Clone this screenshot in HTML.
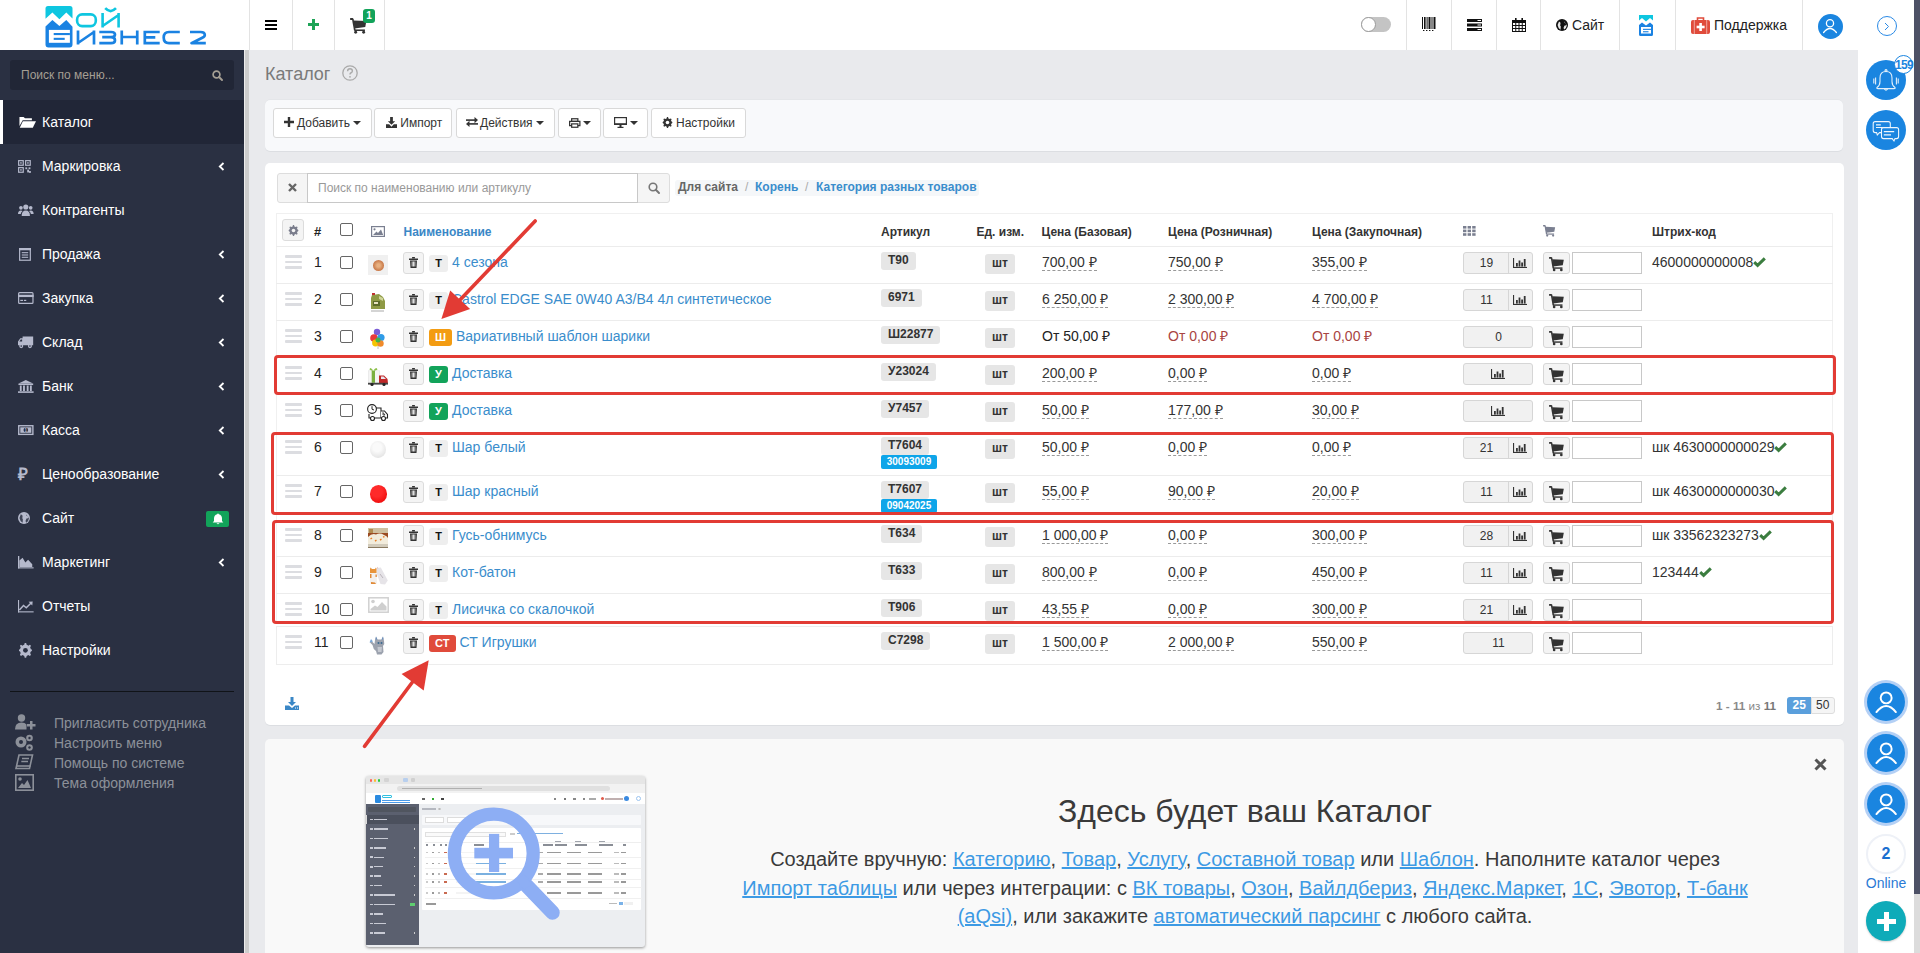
<!DOCTYPE html><html><head><meta charset="utf-8"><style>
*{box-sizing:border-box;margin:0;padding:0}
html,body{width:1920px;height:953px;overflow:hidden}
body{background:#e9eaed;font-family:"Liberation Sans",sans-serif;font-size:14px;color:#333;position:relative}
.a{position:absolute}
svg{position:absolute;overflow:visible}
.hb{position:absolute;top:0;height:50px;border-left:1px solid #e3e3e3}
.mi{position:absolute;left:0;width:244px;height:44px;color:#fff;font-size:14px;line-height:44px;white-space:nowrap}
.mi .t{position:absolute;left:42px;top:0}
.ch{position:absolute;left:218px;top:17px}
.nw{white-space:nowrap}
</style></head><body>
<div class="a" style="left:0;top:0;width:1858px;height:50px;background:#fff"></div>
<div class="hb" style="left:249px;width:44px"></div>
<div class="hb" style="left:292px;width:43px"></div>
<div class="hb" style="left:334px;width:51px"></div>
<div class="hb" style="left:1406px;width:46px"></div>
<div class="hb" style="left:1451px;width:46px"></div>
<div class="hb" style="left:1496px;width:45px"></div>
<div class="hb" style="left:1540px;width:80px"></div>
<div class="hb" style="left:1619px;width:57px"></div>
<div class="hb" style="left:1675px;width:128px"></div>
<div class="hb" style="left:1802px;width:57px"></div>
<div class="hb" style="left:384px;width:1px"></div>
<div class="hb" style="left:1858px;width:1px"></div>
<svg style="left:0;top:0" width="244" height="50" viewBox="0 0 244 50">
<path d="M45.5 8.5 Q45.5 6 48 6 L70 6 Q72.5 6 72.5 8.5 L72.5 18.4 L66.3 12.6 L59.4 19.2 L52.4 12.6 L45.5 18.8 Z" fill="#0ec6e0"/>
<path d="M45.5 26.5 L52.4 20 L59.4 26 L66.3 20 L72.5 26.8 L72.5 44.5 Q72.5 47.5 69.5 47.5 L48.5 47.5 Q45.5 47.5 45.5 44.5 Z" fill="#1a82e2"/>
<rect x="48.9" y="29.9" width="21" height="12.9" fill="#fff"/>
<rect x="53.7" y="33" width="16.2" height="2.1" fill="#1a82e2"/>
<rect x="53.7" y="37.8" width="11" height="2.1" fill="#1a82e2"/>
<g fill="none" stroke="#0ec6e0" stroke-width="2.6">
<rect x="77.1" y="14.4" width="18.7" height="11.7" rx="5"/>
<path d="M102.6 13 L102.6 27.5 M102.6 26 L118.6 15 M118.6 13 L118.6 27.5"/>
<path d="M105.2 8.2 Q110.6 14 116 8.2" />
</g>
<g fill="none" stroke="#1a82e2" stroke-width="2.7">
<path d="M78 30.5 L78 44.5 M78 43 L94 32 M94 30.5 L94 44.5"/>
<path d="M99.3 32 L111 32 Q115 32 115 34.6 Q115 37.2 111 37.2 L102.2 37.2 M111 37.2 Q115 37.2 115 40.2 Q115 43.2 111 43.2 L99.3 43.2"/>
<path d="M121.75 30.5 L121.75 44.5 M137.25 30.5 L137.25 44.5 M121.75 37 L137.25 37"/>
<path d="M159.7 32 L144.8 32 L144.8 43.2 L159.7 43.2 M144.8 37.3 L155.3 37.3" stroke-linejoin="miter"/>
<path d="M179.8 32 L169 32 Q163.7 32 163.7 37.6 Q163.7 43.2 169 43.2 L179.8 43.2"/>
<path d="M190 32 L200.5 32 Q204.8 32 204.8 35 Q204.8 36.6 202.3 37.7 L191.5 43.2 L205.8 43.2" stroke-linejoin="round"/>
</g>
</svg>
<div class="a" style="left:265px;top:20px;width:12px;height:2.4px;background:#000"></div>
<div class="a" style="left:265px;top:24px;width:12px;height:2.4px;background:#000"></div>
<div class="a" style="left:265px;top:28px;width:12px;height:2.4px;background:#000"></div>
<div class="a" style="left:308px;top:23.2px;width:11px;height:3px;background:#1ea457"></div>
<div class="a" style="left:312px;top:19px;width:3px;height:11px;background:#1ea457"></div>
<svg style="left:350px;top:18px" width="16.8" height="15.75" viewBox="0 0 16 15"><g fill="#333"><rect x="0" y="0" width="3" height="1.8" rx=".6"/><path d="M1.8 0.6 L3.4 0.6 L5.4 12 L3.8 12 Z"/><path d="M3.2 2.4 L15.6 2.8 L14.5 8.6 L4.3 9.9 Z"/><rect x="4.2" y="10.9" width="10" height="1.5"/><circle cx="5.4" cy="13.6" r="1.4"/><circle cx="13" cy="13.6" r="1.4"/></g></svg>
<div class="a" style="left:363px;top:9px;width:12px;height:14px;background:#12a35a;border-radius:3px;color:#fff;font-size:10px;font-weight:bold;line-height:14px;text-align:center">1</div>
<div class="a" style="left:1361px;top:17px;width:30px;height:15px;background:#c4c4c4;border-radius:8px"></div>
<div class="a" style="left:1361px;top:17px;width:15px;height:15px;background:#fff;border:1px solid #9a9a9a;border-radius:50%"></div>
<svg style="left:1422px;top:17px" width="14" height="14" viewBox="0 0 14 14"><g fill="#111">
<rect x="0" y="0" width="1" height="12"/><rect x="2" y="0" width="1.6" height="12"/><rect x="4.6" y="0" width="1" height="12"/><rect x="6.5" y="0" width="2" height="12"/><rect x="9.5" y="0" width="1" height="12"/><rect x="11.5" y="0" width="2" height="12"/>
<rect x="1" y="13" width="1.4" height="1"/><rect x="4" y="13" width="1.4" height="1"/><rect x="7" y="13" width="1.4" height="1"/><rect x="10" y="13" width="1.4" height="1"/></g></svg>
<svg style="left:1467px;top:19px" width="15" height="12" viewBox="0 0 15 12"><g fill="#111">
<rect x="0" y="0" width="15" height="3"/><rect x="0" y="4.5" width="15" height="3"/><rect x="0" y="9" width="15" height="3"/></g>
<g fill="#fff"><rect x="10.5" y="1" width="3.5" height="1"/><rect x="10.5" y="5.5" width="3.5" height="1"/><rect x="10.5" y="10" width="3.5" height="1"/></g></svg>
<svg style="left:1512px;top:18px" width="14" height="14" viewBox="0 0 14 14"><g fill="#111">
<rect x="0" y="2" width="14" height="3"/><rect x="3" y="0" width="1.6" height="3"/><rect x="9.4" y="0" width="1.6" height="3"/></g>
<g fill="none" stroke="#111" stroke-width="1"><rect x="0.5" y="4.5" width="13" height="9"/><path d="M3.75 4.5V13.5M7 4.5V13.5M10.25 4.5V13.5M0.5 7.5H13.5M0.5 10.5H13.5"/></g></svg>
<svg style="left:1556px;top:19px" width="12" height="12" viewBox="0 0 12 12"><circle cx="6" cy="6" r="6" fill="#111"/><path d="M3 2.5 Q5 3 4.5 5 Q3.5 6 4.8 7.5 L4.5 10.8 Q2 9 1.6 6 Z M7.5 1.2 Q9 2.5 8.3 3.5 Q9.8 4 10.6 5.5 Q9.5 7 8.5 6.5 Q7 8.5 8.3 10.6 Q10.5 9 10.8 6.5" fill="#fff" opacity=".9"/></svg>
<div class="a nw" style="left:1572px;top:16px;font-size:14px;line-height:18px;color:#222">Сайт</div>
<svg style="left:1639px;top:15px" width="14" height="21" viewBox="0 0 14 21">
<path d="M0 0 L14 0 L14 5.5 L11 3 L7 6.5 L3 3 L0 5.5 Z" fill="#0ec6e0"/>
<path d="M0 10 L3 7.5 L7 10.5 L11 7.5 L14 10 L14 19.5 Q14 21 12.5 21 L1.5 21 Q0 21 0 19.5 Z" fill="#1a82e2"/>
<rect x="2" y="12" width="10" height="6.5" fill="#fff"/><rect x="4" y="13.8" width="8" height="1.1" fill="#1a82e2"/><rect x="4" y="16.2" width="5.5" height="1.1" fill="#1a82e2"/></svg>
<svg style="left:1691px;top:17px" width="19" height="17" viewBox="0 0 19 17">
<path d="M6.5 3 L6.5 1 L12.5 1 L12.5 3" fill="none" stroke="#e04b3b" stroke-width="1.6"/>
<rect x="0" y="3" width="19" height="14" rx="2" fill="#e04b3b"/>
<rect x="2.8" y="3" width="1" height="14" fill="#fff" opacity=".5"/><rect x="15.2" y="3" width="1" height="14" fill="#fff" opacity=".5"/>
<rect x="8.3" y="6" width="2.6" height="8" fill="#fff"/><rect x="5.6" y="8.7" width="8" height="2.6" fill="#fff"/></svg>
<div class="a nw" style="left:1714px;top:16px;font-size:14px;line-height:18px;color:#222">Поддержка</div>
<div class="a" style="left:1817.5px;top:13.5px;width:25.0px;height:25.0px;border-radius:50%;background:#1a85e0;"></div><svg style="left:1822.0px;top:18.0px" width="16.0" height="16.0" viewBox="0 0 16 16"><circle cx="8" cy="5.2" r="3.6" fill="none" stroke="#fff" stroke-width="1.3"/><path d="M1.6 14.5 Q8 6.5 14.4 14.5" fill="none" stroke="#fff" stroke-width="1.3" stroke-linecap="round"/></svg>
<div class="a" style="left:1858px;top:0;width:56px;height:953px;background:#fff"></div>
<div class="a" style="left:1914px;top:0;width:6px;height:894px;background:#4d5166"></div>
<div class="a" style="left:1914px;top:894px;width:6px;height:59px;background:#dcdcdc"></div>
<div class="a" style="left:1877px;top:16px;width:20px;height:20px;border:1px solid #2a8ae6;border-radius:50%"></div>
<svg style="left:1884px;top:22px" width="6" height="9" viewBox="0 0 6 9"><path d="M1 1 L4.5 4.5 L1 8" fill="none" stroke="#2a8ae6" stroke-width="1"/></svg>
<div class="a" style="left:1866px;top:60px;width:40px;height:40px;border-radius:50%;background:#1a85e0"></div>
<svg style="left:1872px;top:68px" width="28" height="24" viewBox="0 0 28 24"><g fill="none" stroke="#fff" stroke-width="1.1" opacity=".88">
<path d="M14 3.5 Q8 3.5 8 10 L8 13.5 Q8 17.5 5 19.5 Q4.3 20.6 6 20.6 L22 20.6 Q23.7 20.6 23 19.5 Q20 17.5 20 13.5 L20 10 Q20 3.5 14 3.5 Z"/><circle cx="14" cy="2.6" r="1"/><path d="M12.3 20.8 Q14 23.5 15.7 20.8"/>
<path d="M1.8 10.5 L1.8 15.5 M3.6 9.6 L3.6 16.4 M26.2 10.5 L26.2 15.5 M24.4 9.6 L24.4 16.4"/></g></svg>
<div class="a" style="left:1893.8px;top:54.9px;width:19px;height:19px;border-radius:50%;background:#fff;border:1px solid #1a85e0"></div>
<div class="a nw" style="left:1892px;top:58px;width:24px;text-align:center;font-size:12px;font-weight:bold;color:#1a85e0;line-height:15px;letter-spacing:-0.6px">159</div>
<div class="a" style="left:1866px;top:110px;width:40px;height:40px;border-radius:50%;background:#1a85e0"></div>
<svg style="left:1872px;top:118px" width="28" height="24" viewBox="0 0 28 24"><g stroke="#fff" stroke-width="1.1" opacity=".92">
<path d="M3.2 3.6 L16.3 3.6 Q18.3 3.6 18.3 5.6 L18.3 12.6 Q18.3 14.6 16.3 14.6 L7.5 14.6 L5.3 17 L4.6 14.6 L3.2 14.6 Q1.2 14.6 1.2 12.6 L1.2 5.6 Q1.2 3.6 3.2 3.6 Z" fill="none"/>
<path d="M4 6.9 L8.8 6.9 M4 9.5 L14.5 9.5" fill="none"/>
<path d="M11.5 9.6 L24.6 9.6 Q26.6 9.6 26.6 11.6 L26.6 18.6 Q26.6 20.6 24.6 20.6 L23 20.6 L22 23 L20.2 20.6 L11.5 20.6 Q9.5 20.6 9.5 18.6 L9.5 11.6 Q9.5 9.6 11.5 9.6 Z" fill="#1a85e0"/>
<path d="M11.8 13.6 L22.2 13.6 M11.8 16.9 L19 16.9" fill="none"/></g></svg>
<div class="a" style="left:1867px;top:683px;width:38px;height:38px;border-radius:50%;background:#1a85e0;box-shadow:0 0 0 3px #b4d0f5"></div><svg style="left:1873.84px;top:689.84px" width="24.32" height="24.32" viewBox="0 0 16 16"><circle cx="8" cy="5.2" r="3.6" fill="none" stroke="#fff" stroke-width="1.3"/><path d="M1.6 14.5 Q8 6.5 14.4 14.5" fill="none" stroke="#fff" stroke-width="1.3" stroke-linecap="round"/></svg>
<div class="a" style="left:1867px;top:734px;width:38px;height:38px;border-radius:50%;background:#1a85e0;box-shadow:0 0 0 3px #b4d0f5"></div><svg style="left:1873.84px;top:740.84px" width="24.32" height="24.32" viewBox="0 0 16 16"><circle cx="8" cy="5.2" r="3.6" fill="none" stroke="#fff" stroke-width="1.3"/><path d="M1.6 14.5 Q8 6.5 14.4 14.5" fill="none" stroke="#fff" stroke-width="1.3" stroke-linecap="round"/></svg>
<div class="a" style="left:1867px;top:785px;width:38px;height:38px;border-radius:50%;background:#1a85e0;box-shadow:0 0 0 3px #b4d0f5"></div><svg style="left:1873.84px;top:791.84px" width="24.32" height="24.32" viewBox="0 0 16 16"><circle cx="8" cy="5.2" r="3.6" fill="none" stroke="#fff" stroke-width="1.3"/><path d="M1.6 14.5 Q8 6.5 14.4 14.5" fill="none" stroke="#fff" stroke-width="1.3" stroke-linecap="round"/></svg>
<div class="a" style="left:1866px;top:833.5px;width:40px;height:40px;border-radius:50%;border:2px solid #eef1f7"></div>
<div class="a" style="left:1866px;top:845px;width:40px;text-align:center;font-size:16px;font-weight:bold;color:#1a6fd0;line-height:18px">2</div>
<div class="a nw" style="left:1858px;top:875px;width:56px;text-align:center;font-size:14px;color:#2a7ad5;line-height:16px">Online</div>
<div class="a" style="left:1866px;top:901px;width:40px;height:40px;border-radius:50%;background:#0eabb9;box-shadow:0 1px 2px rgba(0,0,0,.2)"></div>
<div class="a" style="left:1876.5px;top:918.5px;width:19px;height:5px;background:#fff"></div>
<div class="a" style="left:1883.5px;top:911.5px;width:5px;height:19px;background:#fff"></div>
<div class="a" style="left:0;top:50px;width:244px;height:903px;background:#2a3042"></div>
<div class="a" style="left:244px;top:50px;width:1px;height:903px;background:#ececec"></div>
<div class="a" style="left:245px;top:50px;width:4px;height:903px;background:#cdcdcd"></div>
<div class="a" style="left:10px;top:60px;width:224px;height:30px;background:#212636;border-radius:3px"></div>
<div class="a nw" style="left:21px;top:68px;font-size:12px;line-height:14px;color:#a59f94">Поиск по меню...</div>
<svg style="left:212px;top:70px" width="11" height="11" viewBox="0 0 11 11"><circle cx="4.5" cy="4.5" r="3.4" fill="none" stroke="#a59f94" stroke-width="1.7"/><path d="M7 7 L10 10" stroke="#a59f94" stroke-width="2" stroke-linecap="round"/></svg>
<div class="a" style="left:0;top:100px;width:244px;height:44px;background:#212637"></div>
<div class="a" style="left:0;top:100px;width:3px;height:44px;background:#fff"></div>
<div class="mi" style="top:100px"><span class="t">Каталог</span></div>
<div class="mi" style="top:144px"><span class="t">Маркировка</span></div>
<svg style="left:218px;top:162px" width="7" height="9" viewBox="0 0 7 9"><path d="M5.5 1 L1.8 4.5 L5.5 8" fill="none" stroke="#fff" stroke-width="1.8"/></svg>
<div class="mi" style="top:188px"><span class="t">Контрагенты</span></div>
<div class="mi" style="top:232px"><span class="t">Продажа</span></div>
<svg style="left:218px;top:250px" width="7" height="9" viewBox="0 0 7 9"><path d="M5.5 1 L1.8 4.5 L5.5 8" fill="none" stroke="#fff" stroke-width="1.8"/></svg>
<div class="mi" style="top:276px"><span class="t">Закупка</span></div>
<svg style="left:218px;top:294px" width="7" height="9" viewBox="0 0 7 9"><path d="M5.5 1 L1.8 4.5 L5.5 8" fill="none" stroke="#fff" stroke-width="1.8"/></svg>
<div class="mi" style="top:320px"><span class="t">Склад</span></div>
<svg style="left:218px;top:338px" width="7" height="9" viewBox="0 0 7 9"><path d="M5.5 1 L1.8 4.5 L5.5 8" fill="none" stroke="#fff" stroke-width="1.8"/></svg>
<div class="mi" style="top:364px"><span class="t">Банк</span></div>
<svg style="left:218px;top:382px" width="7" height="9" viewBox="0 0 7 9"><path d="M5.5 1 L1.8 4.5 L5.5 8" fill="none" stroke="#fff" stroke-width="1.8"/></svg>
<div class="mi" style="top:408px"><span class="t">Касса</span></div>
<svg style="left:218px;top:426px" width="7" height="9" viewBox="0 0 7 9"><path d="M5.5 1 L1.8 4.5 L5.5 8" fill="none" stroke="#fff" stroke-width="1.8"/></svg>
<div class="mi" style="top:452px"><span class="t">Ценообразование</span></div>
<svg style="left:218px;top:470px" width="7" height="9" viewBox="0 0 7 9"><path d="M5.5 1 L1.8 4.5 L5.5 8" fill="none" stroke="#fff" stroke-width="1.8"/></svg>
<div class="mi" style="top:496px"><span class="t">Сайт</span></div>
<div class="mi" style="top:540px"><span class="t">Маркетинг</span></div>
<svg style="left:218px;top:558px" width="7" height="9" viewBox="0 0 7 9"><path d="M5.5 1 L1.8 4.5 L5.5 8" fill="none" stroke="#fff" stroke-width="1.8"/></svg>
<div class="mi" style="top:584px"><span class="t">Отчеты</span></div>
<div class="mi" style="top:628px"><span class="t">Настройки</span></div>
<svg style="left:19.259999999999998px;top:115.56px" width="17.48" height="12.88" viewBox="0 0 19 14"><path d="M0.5 12.5 L0.5 1 L5 1 L6.5 2.5 L14 2.5 L14 4.5 L4 4.5 L0.5 11 Z" fill="#fff"/><path d="M0.8 12.8 L4.2 5.6 L18.5 5.6 L15 12.8 Z" fill="#fff"/></svg>
<svg style="left:18.06px;top:159.56px" width="12.88" height="12.88" viewBox="0 0 14 14"><g fill="none" stroke="#b5b9cc" stroke-width="1.3"><rect x="0.7" y="0.7" width="5" height="5"/><rect x="8.3" y="0.7" width="5" height="5"/><rect x="0.7" y="8.3" width="5" height="5"/></g><g fill="#b5b9cc"><rect x="2.4" y="2.4" width="1.6" height="1.6"/><rect x="10" y="2.4" width="1.6" height="1.6"/><rect x="2.4" y="10" width="1.6" height="1.6"/><rect x="8" y="8" width="2" height="2"/><rect x="11.5" y="8" width="2" height="2"/><rect x="10" y="10.5" width="2" height="3"/><rect x="12" y="12" width="2" height="2"/></g></svg>
<svg style="left:18.18px;top:204.02px" width="15.64" height="11.96" viewBox="0 0 17 13"><g fill="#b5b9cc"><circle cx="8.5" cy="3.3" r="2.8"/><circle cx="3.2" cy="4.2" r="2"/><circle cx="13.8" cy="4.2" r="2"/><path d="M4 13 Q4 7 8.5 7 Q13 7 13 13 Z"/><path d="M0 11 Q0 7 3.2 7 Q4.5 7 5 7.5 Q3 9 3 11 Z"/><path d="M17 11 Q17 7 13.8 7 Q12.5 7 12 7.5 Q14 9 14 11 Z"/></g></svg>
<svg style="left:19.02px;top:247.56px" width="11.96" height="12.88" viewBox="0 0 13 14"><g fill="none" stroke="#b5b9cc" stroke-width="1.3"><rect x="0.7" y="0.7" width="11.6" height="12.6"/></g><g fill="#b5b9cc"><rect x="0" y="0" width="13" height="2.5"/><rect x="3" y="4.5" width="7" height="1.2"/><rect x="3" y="7" width="7" height="1.2"/><rect x="3" y="9.5" width="7" height="1.2"/></g></svg>
<svg style="left:18.18px;top:292.02px" width="15.64" height="11.96" viewBox="0 0 17 13"><g fill="none" stroke="#b5b9cc" stroke-width="1.3"><rect x="0.7" y="0.7" width="15.6" height="11.6" rx="1"/></g><g fill="#b5b9cc"><rect x="0" y="3" width="17" height="2.5"/><rect x="2.5" y="8.5" width="3" height="1.3"/><rect x="6.5" y="8.5" width="2.5" height="1.3"/></g></svg>
<svg style="left:18.18px;top:336.02px" width="15.64" height="11.96" viewBox="0 0 17 13"><g fill="#b5b9cc"><path d="M5 0.5 L16.5 0.5 L16.5 10 L0 10 L0 6 L2.5 2.5 L5 2.5 Z"/><circle cx="3.5" cy="11" r="2.2"/><circle cx="13" cy="11" r="2.2"/></g><g fill="#2a3042"><path d="M1.5 6 L3 3.8 L4.5 3.8 L4.5 6 Z"/><circle cx="3.5" cy="11" r="0.9"/><circle cx="13" cy="11" r="0.9"/></g></svg>
<svg style="left:18.18px;top:379.56px" width="15.64" height="12.88" viewBox="0 0 17 14"><g fill="#b5b9cc"><path d="M0 4 L8.5 0 L17 4 Z"/><rect x="0.5" y="4.3" width="16" height="1.2"/><rect x="2" y="6" width="2" height="6"/><rect x="5.5" y="6" width="2" height="6"/><rect x="9.5" y="6" width="2" height="6"/><rect x="13" y="6" width="2" height="6"/><rect x="0" y="12.3" width="17" height="1.7"/></g></svg>
<svg style="left:18.18px;top:424.94px" width="15.64" height="10.120000000000001" viewBox="0 0 17 11"><g fill="none" stroke="#b5b9cc" stroke-width="1.5"><rect x="0.8" y="0.8" width="15.4" height="9.4"/></g><g fill="#b5b9cc"><rect x="2.5" y="2.5" width="12" height="6"/></g><g fill="#2a3042"><circle cx="8.5" cy="5.5" r="2.5"/></g><text x="8.5" y="7.5" font-size="5" fill="#b5b9cc" text-anchor="middle" font-family="Liberation Sans" font-weight="bold">1</text></svg>
<svg style="left:17.5px;top:467.0px" width="13" height="15" viewBox="0 0 13 15"><text x="0" y="13" font-size="17" font-weight="bold" fill="#b5b9cc" font-family="Liberation Sans">₽</text></svg>
<svg style="left:18.02px;top:512.02px" width="11.96" height="11.96" viewBox="0 0 13 13"><circle cx="6.5" cy="6.5" r="6.5" fill="#b5b9cc"/><path d="M3 2.5 Q5.5 3 5 5.5 Q4 6.5 5.3 8 L5 11.8 Q2.2 10 1.6 6.5 Z M8 1 Q9.6 2.6 8.9 3.8 Q10.6 4.3 11.6 6 Q10.4 7.6 9.2 7 Q7.6 9.3 9 11.7 Q11.5 10 11.9 7" fill="#2a3042" opacity=".85"/></svg>
<div class="a" style="left:206px;top:511px;width:23px;height:16px;background:#12a35a;border-radius:2px"></div>
<svg style="left:211.5px;top:513px" width="12" height="12" viewBox="0 0 12 12"><path d="M6 0.5 Q6.8 0.5 6.8 1.3 Q10 2 10 5.5 L10 8 L11.3 9.5 L0.7 9.5 L2 8 L2 5.5 Q2 2 5.2 1.3 Q5.2 0.5 6 0.5 Z M4.5 10.3 Q6 12 7.5 10.3 Z" fill="#fff"/></svg>
<svg style="left:18.18px;top:555.56px" width="15.64" height="12.88" viewBox="0 0 17 14"><g fill="#b5b9cc"><path d="M1.5 12 L1.5 5 L5 2 L8 7 L11 4 L15.5 9 L15.5 12 Z"/><rect x="0" y="0" width="1.4" height="13.5"/><rect x="0" y="12.3" width="17" height="1.2"/></g></svg>
<svg style="left:18.18px;top:599.56px" width="15.64" height="12.88" viewBox="0 0 17 14"><g fill="none" stroke="#b5b9cc" stroke-width="1.6"><path d="M1.5 11 L6 6 L9 8.5 L14.5 3"/></g><g fill="#b5b9cc"><path d="M11.5 2 L16 1.5 L15.5 6 Z"/><rect x="0" y="0" width="1.2" height="13.5"/><rect x="0" y="12.3" width="17" height="1.2"/></g></svg>
<svg style="left:19.06px;top:642.64px" width="12.88" height="14.72" viewBox="0 0 14 16"><g fill="#b5b9cc"><path d="M6.2 0 L7.8 0 L8.3 2 Q9.3 2.3 10 2.9 L11.9 2 L13 3.1 L12.1 5 Q12.6 5.8 12.9 6.7 L14 7.2 L14 8.8 L12.9 9.3 Q12.6 10.2 12.1 11 L13 12.9 L11.9 14 L10 13.1 Q9.3 13.7 8.3 14 L7.8 16 L6.2 16 L5.7 14 Q4.7 13.7 4 13.1 L2.1 14 L1 12.9 L1.9 11 Q1.4 10.2 1.1 9.3 L0 8.8 L0 7.2 L1.1 6.7 Q1.4 5.8 1.9 5 L1 3.1 L2.1 2 L4 2.9 Q4.7 2.3 5.7 2 Z"/></g><circle cx="7" cy="8" r="2.6" fill="#2a3042"/></svg>
<div class="a" style="left:10px;top:691px;width:224px;height:1px;background:#101318"></div>
<div class="a nw" style="left:54px;top:714px;font-size:14px;line-height:18px;color:#8c9099">Пригласить сотрудника</div>
<div class="a nw" style="left:54px;top:734px;font-size:14px;line-height:18px;color:#8c9099">Настроить меню</div>
<div class="a nw" style="left:54px;top:754px;font-size:14px;line-height:18px;color:#8c9099">Помощь по системе</div>
<div class="a nw" style="left:54px;top:774px;font-size:14px;line-height:18px;color:#8c9099">Тема оформления</div>
<svg style="left:15px;top:714px" width="21" height="17" viewBox="0 0 21 17"><g fill="#8c9099"><circle cx="6.5" cy="4" r="3.7"/><path d="M0 15.5 Q0 8.5 6.5 8.5 Q10 8.5 11.5 10.5 L11.5 15.5 Z"/><rect x="12" y="10" width="8.5" height="2.5"/><rect x="15" y="7" width="2.5" height="8.5"/></g></svg>
<svg style="left:15px;top:734px" width="19" height="18" viewBox="0 0 19 18"><g fill="#8c9099"><circle cx="6" cy="8" r="5.5"/><circle cx="14.5" cy="4" r="3.3"/><circle cx="14.5" cy="13.5" r="3.3"/></g><g fill="#2a3042"><circle cx="6" cy="8" r="2"/><circle cx="14.5" cy="4" r="1.2"/><circle cx="14.5" cy="13.5" r="1.2"/></g></svg>
<svg style="left:15px;top:754px" width="19" height="17" viewBox="0 0 19 17"><g fill="none" stroke="#8c9099" stroke-width="1.6"><path d="M4 1 L17.5 1 L14.5 14.5 L1 14.5 Z"/><path d="M2 12 L15.5 12"/><path d="M7 4.5 L14 4.5 M6.3 7.5 L13 7.5"/></g></svg>
<svg style="left:15px;top:774px" width="19" height="17" viewBox="0 0 19 17"><g fill="none" stroke="#8c9099" stroke-width="1.6"><rect x="0.8" y="0.8" width="17.4" height="15.4"/></g><g fill="#8c9099"><circle cx="5" cy="5" r="1.8"/><path d="M3 14 L7 9 L9 11 L12.5 6 L16 14 Z"/></g></svg>
<div class="a nw" style="left:265px;top:64px;font-size:18px;line-height:21px;color:#7a7a7a">Каталог</div>
<svg style="left:342px;top:65px" width="16" height="16" viewBox="0 0 16 16"><circle cx="8" cy="8" r="7.2" fill="none" stroke="#aaa" stroke-width="1.3"/><path d="M5.6 6.2 Q5.6 3.8 8 3.8 Q10.4 3.8 10.4 6 Q10.4 7.3 8.8 8 Q8 8.4 8 9.6" fill="none" stroke="#aaa" stroke-width="1.4"/><circle cx="8" cy="11.8" r="0.9" fill="#aaa"/></svg>
<div class="a" style="left:265px;top:100px;width:1578px;height:51px;background:#f8f9fb;border-radius:5px;box-shadow:0 -0.5px 0 #dfe1e5,0 1px 0 #dcdee2"></div>
<div class="a" style="left:273px;top:108px;width:98.5px;height:30px;background:#fff;border:1px solid #d9d9d9;border-radius:3px"></div>
<div class="a" style="left:374.4px;top:108px;width:78.1px;height:30px;background:#fff;border:1px solid #d9d9d9;border-radius:3px"></div>
<div class="a" style="left:455.6px;top:108px;width:99px;height:30px;background:#fff;border:1px solid #d9d9d9;border-radius:3px"></div>
<div class="a" style="left:557.5px;top:108px;width:43px;height:30px;background:#fff;border:1px solid #d9d9d9;border-radius:3px"></div>
<div class="a" style="left:603.3px;top:108px;width:45px;height:30px;background:#fff;border:1px solid #d9d9d9;border-radius:3px"></div>
<div class="a" style="left:651.3px;top:108px;width:94.5px;height:30px;background:#fff;border:1px solid #d9d9d9;border-radius:3px"></div>
<svg style="left:284px;top:117px" width="10" height="10" viewBox="0 0 10 10"><path d="M3.8 0 H6.2 V3.8 H10 V6.2 H6.2 V10 H3.8 V6.2 H0 V3.8 H3.8 Z" fill="#333"/></svg>
<div class="a nw" style="left:297px;top:116px;font-size:12px;line-height:14px;color:#333">Добавить</div>
<svg style="left:353px;top:121px" width="8" height="4" viewBox="0 0 8 4"><path d="M0 0 L8 0 L4 4 Z" fill="#333"/></svg>
<svg style="left:385.5px;top:117px" width="11" height="11" viewBox="0 0 12 12"><path d="M4.5 0 H7.5 V4.5 H10 L6 8.5 L2 4.5 H4.5 Z" fill="#333"/><path d="M0 8 H3.5 L6 10.5 L8.5 8 H12 V12 H0 Z" fill="#333"/></svg>
<div class="a nw" style="left:400.3px;top:116px;font-size:12px;line-height:14px;color:#333">Импорт</div>
<svg style="left:466px;top:117px" width="12" height="10" viewBox="0 0 12 10"><g fill="#333"><rect x="0" y="2.3" width="9.5" height="1.6"/><path d="M8.5 0 L12 3.1 L8.5 6.2 Z"/><rect x="2.5" y="6.1" width="9.5" height="1.6"/><path d="M3.5 3.8 L0 6.9 L3.5 10 Z"/></g></svg>
<div class="a nw" style="left:480px;top:116px;font-size:12px;line-height:14px;color:#333">Действия</div>
<svg style="left:536px;top:121px" width="8" height="4" viewBox="0 0 8 4"><path d="M0 0 L8 0 L4 4 Z" fill="#333"/></svg>
<svg style="left:568.5px;top:117.5px" width="11.5" height="10" viewBox="0 0 13 11"><g fill="none" stroke="#333" stroke-width="1.4"><rect x="3" y="0.7" width="7" height="3"/><path d="M3 8.5 H0.7 V3.7 H12.3 V8.5 H10"/><rect x="3" y="6.5" width="7" height="3.8"/></g></svg>
<svg style="left:583px;top:121px" width="8" height="4" viewBox="0 0 8 4"><path d="M0 0 L8 0 L4 4 Z" fill="#333"/></svg>
<svg style="left:614px;top:117px" width="13" height="11" viewBox="0 0 13 11"><g fill="#333"><rect x="0" y="0" width="13" height="8"/><rect x="5.5" y="8" width="2" height="2"/><rect x="3.5" y="9.8" width="6" height="1.2"/></g><rect x="1.2" y="1.2" width="10.6" height="5" fill="#fff"/></svg>
<svg style="left:630px;top:121px" width="8" height="4" viewBox="0 0 8 4"><path d="M0 0 L8 0 L4 4 Z" fill="#333"/></svg>
<svg style="left:662px;top:117px" width="11" height="11" viewBox="0 0 14 16"><g fill="#333"><path d="M6.2 0 L7.8 0 L8.3 2 Q9.3 2.3 10 2.9 L11.9 2 L13 3.1 L12.1 5 Q12.6 5.8 12.9 6.7 L14 7.2 L14 8.8 L12.9 9.3 Q12.6 10.2 12.1 11 L13 12.9 L11.9 14 L10 13.1 Q9.3 13.7 8.3 14 L7.8 16 L6.2 16 L5.7 14 Q4.7 13.7 4 13.1 L2.1 14 L1 12.9 L1.9 11 Q1.4 10.2 1.1 9.3 L0 8.8 L0 7.2 L1.1 6.7 Q1.4 5.8 1.9 5 L1 3.1 L2.1 2 L4 2.9 Q4.7 2.3 5.7 2 Z"/></g><circle cx="7" cy="8" r="2.6" fill="#fff"/></svg>
<div class="a nw" style="left:676px;top:116px;font-size:12px;line-height:14px;color:#333">Настройки</div>
<div class="a" style="left:265px;top:163px;width:1579px;height:562px;background:#fff;border-radius:5px;box-shadow:0 1px 0 #dcdee2"></div>
<div class="a" style="left:277px;top:173px;width:392.6px;height:29.5px;background:#f5f5f5;border:1px solid #ddd;border-radius:3px"></div>
<div class="a" style="left:307px;top:173px;width:331px;height:29.5px;background:#fff;border:1px solid #c8c8c8"></div>
<svg style="left:288px;top:183px" width="9" height="9" viewBox="0 0 9 9"><path d="M1 1 L8 8 M8 1 L1 8" stroke="#666" stroke-width="2.4"/></svg>
<div class="a nw" style="left:318px;top:181px;font-size:12px;line-height:14px;color:#999">Поиск по наименованию или артикулу</div>
<svg style="left:647.5px;top:182px" width="12" height="12" viewBox="0 0 12 12"><circle cx="5" cy="5" r="3.8" fill="none" stroke="#777" stroke-width="1.6"/><path d="M7.8 7.8 L11 11" stroke="#777" stroke-width="2" stroke-linecap="round"/></svg>
<div class="a" style="left:675px;top:179.5px;width:304px;height:16.5px;background:#f5f7f9;border-radius:3px"></div>
<div class="a nw" style="left:678px;top:180px;font-size:12px;line-height:14px;font-weight:bold;color:#666">Для сайта</div>
<div class="a nw" style="left:745px;top:180px;font-size:12px;line-height:14px;color:#aaa">/</div>
<div class="a nw" style="left:755px;top:180px;font-size:12px;line-height:14px;font-weight:bold;color:#3a8dcc">Корень</div>
<div class="a nw" style="left:805px;top:180px;font-size:12px;line-height:14px;color:#aaa">/</div>
<div class="a nw" style="left:816px;top:180px;font-size:12px;line-height:14px;font-weight:bold;color:#3a8dcc">Категория разных товаров</div>
<div class="a" style="left:276px;top:213px;width:1557px;height:410px;border:1px solid #f0f0f0;border-bottom:none"></div>
<div class="a" style="left:276px;top:626px;width:1557px;height:38.5px;border:1px solid #ededed"></div>
<div class="a" style="left:276px;top:246px;width:1557px;height:1px;background:#ececec"></div>
<div class="a" style="left:276px;top:283px;width:1557px;height:1px;background:#ececec"></div>
<div class="a" style="left:276px;top:320px;width:1557px;height:1px;background:#ececec"></div>
<div class="a" style="left:276px;top:357px;width:1557px;height:1px;background:#ececec"></div>
<div class="a" style="left:276px;top:393px;width:1557px;height:1px;background:#ececec"></div>
<div class="a" style="left:276px;top:434px;width:1557px;height:1px;background:#ececec"></div>
<div class="a" style="left:276px;top:475px;width:1557px;height:1px;background:#ececec"></div>
<div class="a" style="left:276px;top:520px;width:1557px;height:1px;background:#ececec"></div>
<div class="a" style="left:276px;top:556px;width:1557px;height:1px;background:#ececec"></div>
<div class="a" style="left:276px;top:593px;width:1557px;height:1px;background:#ececec"></div>
<div class="a" style="left:282px;top:219px;width:21.5px;height:21.5px;background:#f4f4f4;border:1px solid #dcdcdc;border-radius:3px"></div>
<svg style="left:287.5px;top:224.5px" width="11" height="11" viewBox="0 0 14 16"><path d="M6.2 0 L7.8 0 L8.3 2 Q9.3 2.3 10 2.9 L11.9 2 L13 3.1 L12.1 5 Q12.6 5.8 12.9 6.7 L14 7.2 L14 8.8 L12.9 9.3 Q12.6 10.2 12.1 11 L13 12.9 L11.9 14 L10 13.1 Q9.3 13.7 8.3 14 L7.8 16 L6.2 16 L5.7 14 Q4.7 13.7 4 13.1 L2.1 14 L1 12.9 L1.9 11 Q1.4 10.2 1.1 9.3 L0 8.8 L0 7.2 L1.1 6.7 Q1.4 5.8 1.9 5 L1 3.1 L2.1 2 L4 2.9 Q4.7 2.3 5.7 2 Z" fill="#7a7d8c"/><circle cx="7" cy="8" r="2.6" fill="#f4f4f4"/></svg>
<div class="a nw" style="left:314px;top:224px;font-size:12px;line-height:14px;font-weight:bold;color:#333;font-size:13px;line-height:15px;color:#222">#</div>
<div class="a" style="left:340px;top:223px;width:13px;height:13px;border:1px solid #666;border-radius:2px;background:#fff"></div>
<svg style="left:371px;top:226px" width="14" height="11" viewBox="0 0 14 11"><rect x="0.6" y="0.6" width="12.8" height="9.8" fill="none" stroke="#7a7f90" stroke-width="1.2"/><circle cx="3.5" cy="3.3" r="1.1" fill="#7a7f90"/><path d="M2 9 L5.5 5.5 L7 7 L10 3.5 L12.2 9 Z" fill="#7a7f90"/></svg>
<div class="a nw" style="left:403.5px;top:225px;font-size:12px;line-height:14px;font-weight:bold;color:#333;color:#3a87c6">Наименование</div>
<div class="a nw" style="left:881px;top:225px;font-size:12px;line-height:14px;font-weight:bold;color:#333">Артикул</div>
<div class="a nw" style="left:976.5px;top:225px;font-size:12px;line-height:14px;font-weight:bold;color:#333">Ед. изм.</div>
<div class="a nw" style="left:1041.5px;top:225px;font-size:12px;line-height:14px;font-weight:bold;color:#333">Цена (Базовая)</div>
<div class="a nw" style="left:1168px;top:225px;font-size:12px;line-height:14px;font-weight:bold;color:#333">Цена (Розничная)</div>
<div class="a nw" style="left:1312px;top:225px;font-size:12px;line-height:14px;font-weight:bold;color:#333">Цена (Закупочная)</div>
<div class="a nw" style="left:1652px;top:225px;font-size:12px;line-height:14px;font-weight:bold;color:#333">Штрих-код</div>
<svg style="left:1463px;top:226px" width="13" height="10" viewBox="0 0 13 10"><g fill="#7a7f90"><rect x="0" y="0" width="3.4" height="2.6"/><rect x="4.6" y="0" width="3.4" height="2.6"/><rect x="9.2" y="0" width="3.4" height="2.6"/><rect x="0" y="3.6" width="3.4" height="2.6"/><rect x="4.6" y="3.6" width="3.4" height="2.6"/><rect x="9.2" y="3.6" width="3.4" height="2.6"/><rect x="0" y="7.2" width="3.4" height="2.6"/><rect x="4.6" y="7.2" width="3.4" height="2.6"/><rect x="9.2" y="7.2" width="3.4" height="2.6"/></g></svg>
<svg style="left:1543px;top:225px" width="12.48" height="11.700000000000001" viewBox="0 0 16 15"><g fill="#7a7f90"><rect x="0" y="0" width="3" height="1.8" rx=".6"/><path d="M1.8 0.6 L3.4 0.6 L5.4 12 L3.8 12 Z"/><path d="M3.2 2.4 L15.6 2.8 L14.5 8.6 L4.3 9.9 Z"/><rect x="4.2" y="10.9" width="10" height="1.5"/><circle cx="5.4" cy="13.6" r="1.4"/><circle cx="13" cy="13.6" r="1.4"/></g></svg>
<div class="a" style="left:285px;top:255.1px;width:17px;height:2.8px;background:#dcdde1;border-radius:1px"></div>
<div class="a" style="left:285px;top:260.6px;width:17px;height:2.8px;background:#dcdde1;border-radius:1px"></div>
<div class="a" style="left:285px;top:266.1px;width:17px;height:2.8px;background:#dcdde1;border-radius:1px"></div>
<div class="a nw" style="left:314px;top:254px;font-size:14px;line-height:16px;color:#222">1</div>
<div class="a" style="left:340px;top:255.5px;width:13px;height:13px;border:1px solid #666;border-radius:2px;background:#fff"></div>
<div class="a" style="left:368px;top:255px;width:20px;height:20px;background:#f0f0f0"></div><div class="a" style="left:372.5px;top:260px;width:11.5px;height:11px;border-radius:50%;background:radial-gradient(circle,#e8b080 20%,#d08858 55%,#c87040 80%,#e0a878)"></div>
<div class="a" style="left:403px;top:252px;width:21px;height:21.5px;background:#f4f4f4;border:1px solid #dcdcdc;border-radius:3px"></div>
<svg style="left:409px;top:257px" width="9" height="11" viewBox="0 0 9 11"><g fill="#333"><rect x="0" y="1.5" width="9" height="1.5"/><rect x="3" y="0" width="3" height="1.5" rx=".5"/><path d="M1 3.5 H8 L7.5 11 H1.5 Z"/></g><g fill="#f4f4f4"><rect x="2.7" y="4.5" width=".9" height="5"/><rect x="4.05" y="4.5" width=".9" height="5"/><rect x="5.4" y="4.5" width=".9" height="5"/></g></svg>
<div class="a" style="left:429px;top:255px;width:19px;height:17px;background:#eee;border-radius:3px;color:#111;font-size:11px;font-weight:bold;line-height:17px;text-align:center">Т</div>
<div class="a nw" style="left:452px;top:254px;font-size:14px;line-height:16px;color:#3a8dcc">4 сезона</div>
<div class="a nw" style="left:881px;top:252px;height:18px;padding:0 7px;background:#e6e6e6;border-radius:3px;font-size:12px;font-weight:bold;line-height:17px;color:#333">Т90</div>
<div class="a nw" style="left:985px;top:254px;width:30px;height:19.5px;background:#e6e6e6;border-radius:3px;font-size:12px;font-weight:bold;line-height:19px;color:#333;text-align:center">шт</div>
<div class="a nw" style="left:1042px;top:254px;font-size:14px;line-height:16px;color:#333;border-bottom:1px dashed #999;padding-bottom:0px">700,00 ₽</div>
<div class="a nw" style="left:1168px;top:254px;font-size:14px;line-height:16px;color:#333;border-bottom:1px dashed #999;padding-bottom:0px">750,00 ₽</div>
<div class="a nw" style="left:1312px;top:254px;font-size:14px;line-height:16px;color:#333;border-bottom:1px dashed #999;padding-bottom:0px">355,00 ₽</div>
<div class="a" style="left:1463px;top:252px;width:69.7px;height:21.5px;background:#f1f1f1;border:1px solid #d6d6d6;border-radius:3px"></div>
<div class="a" style="left:1508px;top:252px;width:1px;height:21.5px;background:#d6d6d6"></div>
<div class="a nw" style="left:1463px;top:256px;width:47px;text-align:center;font-size:12px;line-height:14px;color:#333">19</div>
<svg style="left:1513px;top:257.5px" width="14" height="10" viewBox="0 0 14 10"><g fill="#333"><rect x="0" y="0" width="1.1" height="10"/><rect x="0" y="8.9" width="14" height="1.1"/><rect x="3" y="5" width="1.8" height="3.6"/><rect x="5.6" y="2.5" width="1.8" height="6.1"/><rect x="8.2" y="4.5" width="1.8" height="4.1"/><rect x="10.8" y="1" width="1.8" height="7.6"/></g></svg>
<div class="a" style="left:1543px;top:252px;width:26.5px;height:21.5px;background:#f4f4f4;border:1px solid #d6d6d6;border-radius:3px"></div>
<svg style="left:1549.3px;top:257.2px" width="15.2" height="14.25" viewBox="0 0 16 15"><g fill="#333"><rect x="0" y="0" width="3" height="1.8" rx=".6"/><path d="M1.8 0.6 L3.4 0.6 L5.4 12 L3.8 12 Z"/><path d="M3.2 2.4 L15.6 2.8 L14.5 8.6 L4.3 9.9 Z"/><rect x="4.2" y="10.9" width="10" height="1.5"/><circle cx="5.4" cy="13.6" r="1.4"/><circle cx="13" cy="13.6" r="1.4"/></g></svg>
<div class="a" style="left:1572px;top:252px;width:70px;height:22px;background:#fff;border:1px solid #c8c8c8"></div>
<div class="a nw" style="left:1652px;top:254px;font-size:14px;line-height:16px;color:#333">4600000000008<svg style="position:relative;display:inline-block;vertical-align:middle;margin-top:-3px" width="13" height="10" viewBox="0 0 13 10"><path d="M1.2 5.2 L4.6 8.4 L11.8 1.4" fill="none" stroke="#3b7d3f" stroke-width="3"/></svg></div>
<div class="a" style="left:285px;top:292.1px;width:17px;height:2.8px;background:#dcdde1;border-radius:1px"></div>
<div class="a" style="left:285px;top:297.6px;width:17px;height:2.8px;background:#dcdde1;border-radius:1px"></div>
<div class="a" style="left:285px;top:303.1px;width:17px;height:2.8px;background:#dcdde1;border-radius:1px"></div>
<div class="a nw" style="left:314px;top:291px;font-size:14px;line-height:16px;color:#222">2</div>
<div class="a" style="left:340px;top:292.5px;width:13px;height:13px;border:1px solid #666;border-radius:2px;background:#fff"></div>
<svg style="left:368px;top:291px" width="20" height="22" viewBox="0 0 20 22"><path d="M4 4 L11 3 L15 6 L17 10 L17 18 L3 18 L3 7 Z" fill="#8f9a45"/><rect x="4" y="2" width="3" height="2" fill="#c03030"/><path d="M11 5 L15 7 L15 10 L11 8Z" fill="#cfd59a"/><rect x="5" y="10" width="7" height="5" fill="#5d6b2a"/><rect x="6" y="11" width="4" height="2" fill="#e8e2c0"/><rect x="3" y="19.5" width="13" height="1" fill="#aaa"/></svg>
<div class="a" style="left:403px;top:289px;width:21px;height:21.5px;background:#f4f4f4;border:1px solid #dcdcdc;border-radius:3px"></div>
<svg style="left:409px;top:294px" width="9" height="11" viewBox="0 0 9 11"><g fill="#333"><rect x="0" y="1.5" width="9" height="1.5"/><rect x="3" y="0" width="3" height="1.5" rx=".5"/><path d="M1 3.5 H8 L7.5 11 H1.5 Z"/></g><g fill="#f4f4f4"><rect x="2.7" y="4.5" width=".9" height="5"/><rect x="4.05" y="4.5" width=".9" height="5"/><rect x="5.4" y="4.5" width=".9" height="5"/></g></svg>
<div class="a" style="left:429px;top:292px;width:19px;height:17px;background:#eee;border-radius:3px;color:#111;font-size:11px;font-weight:bold;line-height:17px;text-align:center">Т</div>
<div class="a nw" style="left:452px;top:291px;font-size:14px;line-height:16px;color:#3a8dcc">Castrol EDGE SAE 0W40 A3/B4 4л синтетическое</div>
<div class="a nw" style="left:881px;top:289px;height:18px;padding:0 7px;background:#e6e6e6;border-radius:3px;font-size:12px;font-weight:bold;line-height:17px;color:#333">6971</div>
<div class="a nw" style="left:985px;top:291px;width:30px;height:19.5px;background:#e6e6e6;border-radius:3px;font-size:12px;font-weight:bold;line-height:19px;color:#333;text-align:center">шт</div>
<div class="a nw" style="left:1042px;top:291px;font-size:14px;line-height:16px;color:#333;border-bottom:1px dashed #999;padding-bottom:0px">6 250,00 ₽</div>
<div class="a nw" style="left:1168px;top:291px;font-size:14px;line-height:16px;color:#333;border-bottom:1px dashed #999;padding-bottom:0px">2 300,00 ₽</div>
<div class="a nw" style="left:1312px;top:291px;font-size:14px;line-height:16px;color:#333;border-bottom:1px dashed #999;padding-bottom:0px">4 700,00 ₽</div>
<div class="a" style="left:1463px;top:289px;width:69.7px;height:21.5px;background:#f1f1f1;border:1px solid #d6d6d6;border-radius:3px"></div>
<div class="a" style="left:1508px;top:289px;width:1px;height:21.5px;background:#d6d6d6"></div>
<div class="a nw" style="left:1463px;top:293px;width:47px;text-align:center;font-size:12px;line-height:14px;color:#333">11</div>
<svg style="left:1513px;top:294.5px" width="14" height="10" viewBox="0 0 14 10"><g fill="#333"><rect x="0" y="0" width="1.1" height="10"/><rect x="0" y="8.9" width="14" height="1.1"/><rect x="3" y="5" width="1.8" height="3.6"/><rect x="5.6" y="2.5" width="1.8" height="6.1"/><rect x="8.2" y="4.5" width="1.8" height="4.1"/><rect x="10.8" y="1" width="1.8" height="7.6"/></g></svg>
<div class="a" style="left:1543px;top:289px;width:26.5px;height:21.5px;background:#f4f4f4;border:1px solid #d6d6d6;border-radius:3px"></div>
<svg style="left:1549.3px;top:294.2px" width="15.2" height="14.25" viewBox="0 0 16 15"><g fill="#333"><rect x="0" y="0" width="3" height="1.8" rx=".6"/><path d="M1.8 0.6 L3.4 0.6 L5.4 12 L3.8 12 Z"/><path d="M3.2 2.4 L15.6 2.8 L14.5 8.6 L4.3 9.9 Z"/><rect x="4.2" y="10.9" width="10" height="1.5"/><circle cx="5.4" cy="13.6" r="1.4"/><circle cx="13" cy="13.6" r="1.4"/></g></svg>
<div class="a" style="left:1572px;top:289px;width:70px;height:22px;background:#fff;border:1px solid #c8c8c8"></div>
<div class="a" style="left:285px;top:329.1px;width:17px;height:2.8px;background:#dcdde1;border-radius:1px"></div>
<div class="a" style="left:285px;top:334.6px;width:17px;height:2.8px;background:#dcdde1;border-radius:1px"></div>
<div class="a" style="left:285px;top:340.1px;width:17px;height:2.8px;background:#dcdde1;border-radius:1px"></div>
<div class="a nw" style="left:314px;top:328px;font-size:14px;line-height:16px;color:#222">3</div>
<div class="a" style="left:340px;top:329.5px;width:13px;height:13px;border:1px solid #666;border-radius:2px;background:#fff"></div>
<svg style="left:368px;top:328px" width="20" height="22" viewBox="0 0 20 22"><circle cx="9" cy="4" r="3.2" fill="#7a5cd6"/><circle cx="6" cy="10" r="3.8" fill="#e83a3a"/><circle cx="13" cy="9.5" r="3.6" fill="#2f9be8"/><circle cx="7.5" cy="15" r="3.4" fill="#f5c400"/><circle cx="12.5" cy="15.5" r="3.2" fill="#f08a2a"/><circle cx="10" cy="12" r="2.5" fill="#44b34a"/><path d="M10 18 L10 21" stroke="#999" stroke-width=".6"/></svg>
<div class="a" style="left:403px;top:326px;width:21px;height:21.5px;background:#f4f4f4;border:1px solid #dcdcdc;border-radius:3px"></div>
<svg style="left:409px;top:331px" width="9" height="11" viewBox="0 0 9 11"><g fill="#333"><rect x="0" y="1.5" width="9" height="1.5"/><rect x="3" y="0" width="3" height="1.5" rx=".5"/><path d="M1 3.5 H8 L7.5 11 H1.5 Z"/></g><g fill="#f4f4f4"><rect x="2.7" y="4.5" width=".9" height="5"/><rect x="4.05" y="4.5" width=".9" height="5"/><rect x="5.4" y="4.5" width=".9" height="5"/></g></svg>
<div class="a" style="left:429px;top:329px;width:23px;height:17px;background:#f39c12;border-radius:3px;color:#fff;font-size:11px;font-weight:bold;line-height:17px;text-align:center">Ш</div>
<div class="a nw" style="left:456px;top:328px;font-size:14px;line-height:16px;color:#3a8dcc">Вариативный шаблон шарики</div>
<div class="a nw" style="left:881px;top:326px;height:18px;padding:0 7px;background:#e6e6e6;border-radius:3px;font-size:12px;font-weight:bold;line-height:17px;color:#333">Ш22877</div>
<div class="a nw" style="left:985px;top:328px;width:30px;height:19.5px;background:#e6e6e6;border-radius:3px;font-size:12px;font-weight:bold;line-height:19px;color:#333;text-align:center">шт</div>
<div class="a nw" style="left:1042px;top:328px;font-size:14px;line-height:16px;color:#222">От 50,00 ₽</div>
<div class="a nw" style="left:1168px;top:328px;font-size:14px;line-height:16px;color:#a94442">От 0,00 ₽</div>
<div class="a nw" style="left:1312px;top:328px;font-size:14px;line-height:16px;color:#a94442">От 0,00 ₽</div>
<div class="a" style="left:1463px;top:326px;width:69.7px;height:21.5px;background:#f1f1f1;border:1px solid #d6d6d6;border-radius:3px"></div>
<div class="a nw" style="left:1463px;top:330px;width:71px;text-align:center;font-size:12px;line-height:14px;color:#333">0</div>
<div class="a" style="left:1543px;top:326px;width:26.5px;height:21.5px;background:#f4f4f4;border:1px solid #d6d6d6;border-radius:3px"></div>
<svg style="left:1549.3px;top:331.2px" width="15.2" height="14.25" viewBox="0 0 16 15"><g fill="#333"><rect x="0" y="0" width="3" height="1.8" rx=".6"/><path d="M1.8 0.6 L3.4 0.6 L5.4 12 L3.8 12 Z"/><path d="M3.2 2.4 L15.6 2.8 L14.5 8.6 L4.3 9.9 Z"/><rect x="4.2" y="10.9" width="10" height="1.5"/><circle cx="5.4" cy="13.6" r="1.4"/><circle cx="13" cy="13.6" r="1.4"/></g></svg>
<div class="a" style="left:1572px;top:326px;width:70px;height:22px;background:#fff;border:1px solid #c8c8c8"></div>
<div class="a" style="left:285px;top:366.1px;width:17px;height:2.8px;background:#dcdde1;border-radius:1px"></div>
<div class="a" style="left:285px;top:371.6px;width:17px;height:2.8px;background:#dcdde1;border-radius:1px"></div>
<div class="a" style="left:285px;top:377.1px;width:17px;height:2.8px;background:#dcdde1;border-radius:1px"></div>
<div class="a nw" style="left:314px;top:365px;font-size:14px;line-height:16px;color:#222">4</div>
<div class="a" style="left:340px;top:366.5px;width:13px;height:13px;border:1px solid #666;border-radius:2px;background:#fff"></div>
<svg style="left:368px;top:365px" width="21" height="22" viewBox="0 0 21 22"><rect x="0.5" y="5.8" width="11.3" height="12" fill="#f4f4f4" stroke="#ddd" stroke-width=".5"/><rect x="3.7" y="5.8" width="3.3" height="12" fill="#7bb040"/><path d="M5.3 5.5 Q2 1 1.5 4.5 Q3 6 5.3 5.5 Q8.5 1 9.5 4.5 Q8 6 5.3 5.5" fill="#8cc04a"/><path d="M11 10.5 L16 10.5 L19.5 14 L20 18.5 L11 18.5 Z" fill="#c02828"/><path d="M13 11.5 L15.5 11.5 L18 14 L13 14 Z" fill="#e8e8f0"/><rect x="0" y="17.8" width="20" height="1.8" fill="#444"/><circle cx="4" cy="19.5" r="1.6" fill="#222"/><circle cx="16" cy="19.5" r="1.6" fill="#222"/></svg>
<div class="a" style="left:403px;top:363px;width:21px;height:21.5px;background:#f4f4f4;border:1px solid #dcdcdc;border-radius:3px"></div>
<svg style="left:409px;top:368px" width="9" height="11" viewBox="0 0 9 11"><g fill="#333"><rect x="0" y="1.5" width="9" height="1.5"/><rect x="3" y="0" width="3" height="1.5" rx=".5"/><path d="M1 3.5 H8 L7.5 11 H1.5 Z"/></g><g fill="#f4f4f4"><rect x="2.7" y="4.5" width=".9" height="5"/><rect x="4.05" y="4.5" width=".9" height="5"/><rect x="5.4" y="4.5" width=".9" height="5"/></g></svg>
<div class="a" style="left:429px;top:366px;width:19px;height:17px;background:#12a35a;border-radius:3px;color:#fff;font-size:11px;font-weight:bold;line-height:17px;text-align:center">У</div>
<div class="a nw" style="left:452px;top:365px;font-size:14px;line-height:16px;color:#3a8dcc">Доставка</div>
<div class="a nw" style="left:881px;top:363px;height:18px;padding:0 7px;background:#e6e6e6;border-radius:3px;font-size:12px;font-weight:bold;line-height:17px;color:#333">У23024</div>
<div class="a nw" style="left:985px;top:365px;width:30px;height:19.5px;background:#e6e6e6;border-radius:3px;font-size:12px;font-weight:bold;line-height:19px;color:#333;text-align:center">шт</div>
<div class="a nw" style="left:1042px;top:365px;font-size:14px;line-height:16px;color:#333;border-bottom:1px dashed #999;padding-bottom:0px">200,00 ₽</div>
<div class="a nw" style="left:1168px;top:365px;font-size:14px;line-height:16px;color:#333;border-bottom:1px dashed #999;padding-bottom:0px">0,00 ₽</div>
<div class="a nw" style="left:1312px;top:365px;font-size:14px;line-height:16px;color:#333;border-bottom:1px dashed #999;padding-bottom:0px">0,00 ₽</div>
<div class="a" style="left:1463px;top:363px;width:69.7px;height:21.5px;background:#f1f1f1;border:1px solid #d6d6d6;border-radius:3px"></div>
<svg style="left:1491px;top:368.5px" width="14" height="10" viewBox="0 0 14 10"><g fill="#333"><rect x="0" y="0" width="1.1" height="10"/><rect x="0" y="8.9" width="14" height="1.1"/><rect x="3" y="5" width="1.8" height="3.6"/><rect x="5.6" y="2.5" width="1.8" height="6.1"/><rect x="8.2" y="4.5" width="1.8" height="4.1"/><rect x="10.8" y="1" width="1.8" height="7.6"/></g></svg>
<div class="a" style="left:1543px;top:363px;width:26.5px;height:21.5px;background:#f4f4f4;border:1px solid #d6d6d6;border-radius:3px"></div>
<svg style="left:1549.3px;top:368.2px" width="15.2" height="14.25" viewBox="0 0 16 15"><g fill="#333"><rect x="0" y="0" width="3" height="1.8" rx=".6"/><path d="M1.8 0.6 L3.4 0.6 L5.4 12 L3.8 12 Z"/><path d="M3.2 2.4 L15.6 2.8 L14.5 8.6 L4.3 9.9 Z"/><rect x="4.2" y="10.9" width="10" height="1.5"/><circle cx="5.4" cy="13.6" r="1.4"/><circle cx="13" cy="13.6" r="1.4"/></g></svg>
<div class="a" style="left:1572px;top:363px;width:70px;height:22px;background:#fff;border:1px solid #c8c8c8"></div>
<div class="a" style="left:285px;top:403.1px;width:17px;height:2.8px;background:#dcdde1;border-radius:1px"></div>
<div class="a" style="left:285px;top:408.6px;width:17px;height:2.8px;background:#dcdde1;border-radius:1px"></div>
<div class="a" style="left:285px;top:414.1px;width:17px;height:2.8px;background:#dcdde1;border-radius:1px"></div>
<div class="a nw" style="left:314px;top:402px;font-size:14px;line-height:16px;color:#222">5</div>
<div class="a" style="left:340px;top:403.5px;width:13px;height:13px;border:1px solid #666;border-radius:2px;background:#fff"></div>
<svg style="left:367px;top:403px" width="22" height="20" viewBox="0 0 22 20"><g fill="#fff" stroke="#222" stroke-width="1.1"><path d="M7 5 L14 5 L14 15 L2 15 L2 11"/><path d="M14 8 L17.5 8 L20.5 11.5 L20.5 15 L14 15"/><circle cx="5" cy="6" r="4.4"/><circle cx="5.5" cy="15.5" r="2"/><circle cx="16.5" cy="15.5" r="2"/></g><path d="M5 3.2 L5 6.2 L7 7" fill="none" stroke="#222" stroke-width="1"/><path d="M16 9.5 L18 12 L16 12 Z" fill="none" stroke="#222" stroke-width=".8"/></svg>
<div class="a" style="left:403px;top:400px;width:21px;height:21.5px;background:#f4f4f4;border:1px solid #dcdcdc;border-radius:3px"></div>
<svg style="left:409px;top:405px" width="9" height="11" viewBox="0 0 9 11"><g fill="#333"><rect x="0" y="1.5" width="9" height="1.5"/><rect x="3" y="0" width="3" height="1.5" rx=".5"/><path d="M1 3.5 H8 L7.5 11 H1.5 Z"/></g><g fill="#f4f4f4"><rect x="2.7" y="4.5" width=".9" height="5"/><rect x="4.05" y="4.5" width=".9" height="5"/><rect x="5.4" y="4.5" width=".9" height="5"/></g></svg>
<div class="a" style="left:429px;top:403px;width:19px;height:17px;background:#12a35a;border-radius:3px;color:#fff;font-size:11px;font-weight:bold;line-height:17px;text-align:center">У</div>
<div class="a nw" style="left:452px;top:402px;font-size:14px;line-height:16px;color:#3a8dcc">Доставка</div>
<div class="a nw" style="left:881px;top:400px;height:18px;padding:0 7px;background:#e6e6e6;border-radius:3px;font-size:12px;font-weight:bold;line-height:17px;color:#333">У7457</div>
<div class="a nw" style="left:985px;top:402px;width:30px;height:19.5px;background:#e6e6e6;border-radius:3px;font-size:12px;font-weight:bold;line-height:19px;color:#333;text-align:center">шт</div>
<div class="a nw" style="left:1042px;top:402px;font-size:14px;line-height:16px;color:#333;border-bottom:1px dashed #999;padding-bottom:0px">50,00 ₽</div>
<div class="a nw" style="left:1168px;top:402px;font-size:14px;line-height:16px;color:#333;border-bottom:1px dashed #999;padding-bottom:0px">177,00 ₽</div>
<div class="a nw" style="left:1312px;top:402px;font-size:14px;line-height:16px;color:#333;border-bottom:1px dashed #999;padding-bottom:0px">30,00 ₽</div>
<div class="a" style="left:1463px;top:400px;width:69.7px;height:21.5px;background:#f1f1f1;border:1px solid #d6d6d6;border-radius:3px"></div>
<svg style="left:1491px;top:405.5px" width="14" height="10" viewBox="0 0 14 10"><g fill="#333"><rect x="0" y="0" width="1.1" height="10"/><rect x="0" y="8.9" width="14" height="1.1"/><rect x="3" y="5" width="1.8" height="3.6"/><rect x="5.6" y="2.5" width="1.8" height="6.1"/><rect x="8.2" y="4.5" width="1.8" height="4.1"/><rect x="10.8" y="1" width="1.8" height="7.6"/></g></svg>
<div class="a" style="left:1543px;top:400px;width:26.5px;height:21.5px;background:#f4f4f4;border:1px solid #d6d6d6;border-radius:3px"></div>
<svg style="left:1549.3px;top:405.2px" width="15.2" height="14.25" viewBox="0 0 16 15"><g fill="#333"><rect x="0" y="0" width="3" height="1.8" rx=".6"/><path d="M1.8 0.6 L3.4 0.6 L5.4 12 L3.8 12 Z"/><path d="M3.2 2.4 L15.6 2.8 L14.5 8.6 L4.3 9.9 Z"/><rect x="4.2" y="10.9" width="10" height="1.5"/><circle cx="5.4" cy="13.6" r="1.4"/><circle cx="13" cy="13.6" r="1.4"/></g></svg>
<div class="a" style="left:1572px;top:400px;width:70px;height:22px;background:#fff;border:1px solid #c8c8c8"></div>
<div class="a" style="left:285px;top:440.1px;width:17px;height:2.8px;background:#dcdde1;border-radius:1px"></div>
<div class="a" style="left:285px;top:445.6px;width:17px;height:2.8px;background:#dcdde1;border-radius:1px"></div>
<div class="a" style="left:285px;top:451.1px;width:17px;height:2.8px;background:#dcdde1;border-radius:1px"></div>
<div class="a nw" style="left:314px;top:439px;font-size:14px;line-height:16px;color:#222">6</div>
<div class="a" style="left:340px;top:440.5px;width:13px;height:13px;border:1px solid #666;border-radius:2px;background:#fff"></div>
<div class="a" style="left:369.8px;top:440.8px;width:16.5px;height:17.5px;border-radius:50%;background:radial-gradient(circle at 45% 38%,#fafafa 30%,#e8e8e8 68%,#d2d2d2)"></div>
<div class="a" style="left:403px;top:437px;width:21px;height:21.5px;background:#f4f4f4;border:1px solid #dcdcdc;border-radius:3px"></div>
<svg style="left:409px;top:442px" width="9" height="11" viewBox="0 0 9 11"><g fill="#333"><rect x="0" y="1.5" width="9" height="1.5"/><rect x="3" y="0" width="3" height="1.5" rx=".5"/><path d="M1 3.5 H8 L7.5 11 H1.5 Z"/></g><g fill="#f4f4f4"><rect x="2.7" y="4.5" width=".9" height="5"/><rect x="4.05" y="4.5" width=".9" height="5"/><rect x="5.4" y="4.5" width=".9" height="5"/></g></svg>
<div class="a" style="left:429px;top:440px;width:19px;height:17px;background:#eee;border-radius:3px;color:#111;font-size:11px;font-weight:bold;line-height:17px;text-align:center">Т</div>
<div class="a nw" style="left:452px;top:439px;font-size:14px;line-height:16px;color:#3a8dcc">Шар белый</div>
<div class="a nw" style="left:881px;top:437px;height:18px;padding:0 7px;background:#e6e6e6;border-radius:3px;font-size:12px;font-weight:bold;line-height:17px;color:#333">Т7604</div>
<div class="a nw" style="left:881px;top:455px;width:56px;height:14px;background:#0ea5e9;border-radius:2px;font-size:10px;font-weight:bold;line-height:14px;color:#fff;text-align:center">30093009</div>
<div class="a nw" style="left:985px;top:439px;width:30px;height:19.5px;background:#e6e6e6;border-radius:3px;font-size:12px;font-weight:bold;line-height:19px;color:#333;text-align:center">шт</div>
<div class="a nw" style="left:1042px;top:439px;font-size:14px;line-height:16px;color:#333;border-bottom:1px dashed #999;padding-bottom:0px">50,00 ₽</div>
<div class="a nw" style="left:1168px;top:439px;font-size:14px;line-height:16px;color:#333;border-bottom:1px dashed #999;padding-bottom:0px">0,00 ₽</div>
<div class="a nw" style="left:1312px;top:439px;font-size:14px;line-height:16px;color:#333;border-bottom:1px dashed #999;padding-bottom:0px">0,00 ₽</div>
<div class="a" style="left:1463px;top:437px;width:69.7px;height:21.5px;background:#f1f1f1;border:1px solid #d6d6d6;border-radius:3px"></div>
<div class="a" style="left:1508px;top:437px;width:1px;height:21.5px;background:#d6d6d6"></div>
<div class="a nw" style="left:1463px;top:441px;width:47px;text-align:center;font-size:12px;line-height:14px;color:#333">21</div>
<svg style="left:1513px;top:442.5px" width="14" height="10" viewBox="0 0 14 10"><g fill="#333"><rect x="0" y="0" width="1.1" height="10"/><rect x="0" y="8.9" width="14" height="1.1"/><rect x="3" y="5" width="1.8" height="3.6"/><rect x="5.6" y="2.5" width="1.8" height="6.1"/><rect x="8.2" y="4.5" width="1.8" height="4.1"/><rect x="10.8" y="1" width="1.8" height="7.6"/></g></svg>
<div class="a" style="left:1543px;top:437px;width:26.5px;height:21.5px;background:#f4f4f4;border:1px solid #d6d6d6;border-radius:3px"></div>
<svg style="left:1549.3px;top:442.2px" width="15.2" height="14.25" viewBox="0 0 16 15"><g fill="#333"><rect x="0" y="0" width="3" height="1.8" rx=".6"/><path d="M1.8 0.6 L3.4 0.6 L5.4 12 L3.8 12 Z"/><path d="M3.2 2.4 L15.6 2.8 L14.5 8.6 L4.3 9.9 Z"/><rect x="4.2" y="10.9" width="10" height="1.5"/><circle cx="5.4" cy="13.6" r="1.4"/><circle cx="13" cy="13.6" r="1.4"/></g></svg>
<div class="a" style="left:1572px;top:437px;width:70px;height:22px;background:#fff;border:1px solid #c8c8c8"></div>
<div class="a nw" style="left:1652px;top:439px;font-size:14px;line-height:16px;color:#333">шк 4630000000029<svg style="position:relative;display:inline-block;vertical-align:middle;margin-top:-3px" width="13" height="10" viewBox="0 0 13 10"><path d="M1.2 5.2 L4.6 8.4 L11.8 1.4" fill="none" stroke="#3b7d3f" stroke-width="3"/></svg></div>
<div class="a" style="left:285px;top:484.1px;width:17px;height:2.8px;background:#dcdde1;border-radius:1px"></div>
<div class="a" style="left:285px;top:489.6px;width:17px;height:2.8px;background:#dcdde1;border-radius:1px"></div>
<div class="a" style="left:285px;top:495.1px;width:17px;height:2.8px;background:#dcdde1;border-radius:1px"></div>
<div class="a nw" style="left:314px;top:483px;font-size:14px;line-height:16px;color:#222">7</div>
<div class="a" style="left:340px;top:484.5px;width:13px;height:13px;border:1px solid #666;border-radius:2px;background:#fff"></div>
<div class="a" style="left:369.5px;top:484.8px;width:17.5px;height:18px;border-radius:50%;background:radial-gradient(circle at 40% 35%,#ff2a2a 35%,#f01010 75%,#d00000)"></div>
<div class="a" style="left:403px;top:481px;width:21px;height:21.5px;background:#f4f4f4;border:1px solid #dcdcdc;border-radius:3px"></div>
<svg style="left:409px;top:486px" width="9" height="11" viewBox="0 0 9 11"><g fill="#333"><rect x="0" y="1.5" width="9" height="1.5"/><rect x="3" y="0" width="3" height="1.5" rx=".5"/><path d="M1 3.5 H8 L7.5 11 H1.5 Z"/></g><g fill="#f4f4f4"><rect x="2.7" y="4.5" width=".9" height="5"/><rect x="4.05" y="4.5" width=".9" height="5"/><rect x="5.4" y="4.5" width=".9" height="5"/></g></svg>
<div class="a" style="left:429px;top:484px;width:19px;height:17px;background:#eee;border-radius:3px;color:#111;font-size:11px;font-weight:bold;line-height:17px;text-align:center">Т</div>
<div class="a nw" style="left:452px;top:483px;font-size:14px;line-height:16px;color:#3a8dcc">Шар красный</div>
<div class="a nw" style="left:881px;top:481px;height:18px;padding:0 7px;background:#e6e6e6;border-radius:3px;font-size:12px;font-weight:bold;line-height:17px;color:#333">Т7607</div>
<div class="a nw" style="left:881px;top:499px;width:56px;height:14px;background:#0ea5e9;border-radius:2px;font-size:10px;font-weight:bold;line-height:14px;color:#fff;text-align:center">09042025</div>
<div class="a nw" style="left:985px;top:483px;width:30px;height:19.5px;background:#e6e6e6;border-radius:3px;font-size:12px;font-weight:bold;line-height:19px;color:#333;text-align:center">шт</div>
<div class="a nw" style="left:1042px;top:483px;font-size:14px;line-height:16px;color:#333;border-bottom:1px dashed #999;padding-bottom:0px">55,00 ₽</div>
<div class="a nw" style="left:1168px;top:483px;font-size:14px;line-height:16px;color:#333;border-bottom:1px dashed #999;padding-bottom:0px">90,00 ₽</div>
<div class="a nw" style="left:1312px;top:483px;font-size:14px;line-height:16px;color:#333;border-bottom:1px dashed #999;padding-bottom:0px">20,00 ₽</div>
<div class="a" style="left:1463px;top:481px;width:69.7px;height:21.5px;background:#f1f1f1;border:1px solid #d6d6d6;border-radius:3px"></div>
<div class="a" style="left:1508px;top:481px;width:1px;height:21.5px;background:#d6d6d6"></div>
<div class="a nw" style="left:1463px;top:485px;width:47px;text-align:center;font-size:12px;line-height:14px;color:#333">11</div>
<svg style="left:1513px;top:486.5px" width="14" height="10" viewBox="0 0 14 10"><g fill="#333"><rect x="0" y="0" width="1.1" height="10"/><rect x="0" y="8.9" width="14" height="1.1"/><rect x="3" y="5" width="1.8" height="3.6"/><rect x="5.6" y="2.5" width="1.8" height="6.1"/><rect x="8.2" y="4.5" width="1.8" height="4.1"/><rect x="10.8" y="1" width="1.8" height="7.6"/></g></svg>
<div class="a" style="left:1543px;top:481px;width:26.5px;height:21.5px;background:#f4f4f4;border:1px solid #d6d6d6;border-radius:3px"></div>
<svg style="left:1549.3px;top:486.2px" width="15.2" height="14.25" viewBox="0 0 16 15"><g fill="#333"><rect x="0" y="0" width="3" height="1.8" rx=".6"/><path d="M1.8 0.6 L3.4 0.6 L5.4 12 L3.8 12 Z"/><path d="M3.2 2.4 L15.6 2.8 L14.5 8.6 L4.3 9.9 Z"/><rect x="4.2" y="10.9" width="10" height="1.5"/><circle cx="5.4" cy="13.6" r="1.4"/><circle cx="13" cy="13.6" r="1.4"/></g></svg>
<div class="a" style="left:1572px;top:481px;width:70px;height:22px;background:#fff;border:1px solid #c8c8c8"></div>
<div class="a nw" style="left:1652px;top:483px;font-size:14px;line-height:16px;color:#333">шк 4630000000030<svg style="position:relative;display:inline-block;vertical-align:middle;margin-top:-3px" width="13" height="10" viewBox="0 0 13 10"><path d="M1.2 5.2 L4.6 8.4 L11.8 1.4" fill="none" stroke="#3b7d3f" stroke-width="3"/></svg></div>
<div class="a" style="left:285px;top:528.1px;width:17px;height:2.8px;background:#dcdde1;border-radius:1px"></div>
<div class="a" style="left:285px;top:533.6px;width:17px;height:2.8px;background:#dcdde1;border-radius:1px"></div>
<div class="a" style="left:285px;top:539.1px;width:17px;height:2.8px;background:#dcdde1;border-radius:1px"></div>
<div class="a nw" style="left:314px;top:527px;font-size:14px;line-height:16px;color:#222">8</div>
<div class="a" style="left:340px;top:528.5px;width:13px;height:13px;border:1px solid #666;border-radius:2px;background:#fff"></div>
<svg style="left:368px;top:528px" width="20" height="20" viewBox="0 0 20 20"><rect x="0" y="0" width="20" height="20" fill="#cfc0a0"/><rect x="1" y="1" width="4" height="4" fill="#b08a50"/><rect x="0" y="5" width="20" height="5" fill="#9a4a22"/><path d="M0 9 Q4 5 8 6.5 Q12 4.5 16 7 Q19 8 20 10 L20 16 L0 16 Z" fill="#f2ecdc"/><path d="M2.5 11 L4 10 M7 13 L8.5 12.2 M12 12 L13.5 11.2 M15 9 L16.5 8.6" stroke="#e8802a" stroke-width="1.5"/><rect x="0" y="16" width="20" height="4" fill="#d2cbbb"/><rect x="0" y="19" width="20" height="1" fill="#8a7a60"/></svg>
<div class="a" style="left:403px;top:525px;width:21px;height:21.5px;background:#f4f4f4;border:1px solid #dcdcdc;border-radius:3px"></div>
<svg style="left:409px;top:530px" width="9" height="11" viewBox="0 0 9 11"><g fill="#333"><rect x="0" y="1.5" width="9" height="1.5"/><rect x="3" y="0" width="3" height="1.5" rx=".5"/><path d="M1 3.5 H8 L7.5 11 H1.5 Z"/></g><g fill="#f4f4f4"><rect x="2.7" y="4.5" width=".9" height="5"/><rect x="4.05" y="4.5" width=".9" height="5"/><rect x="5.4" y="4.5" width=".9" height="5"/></g></svg>
<div class="a" style="left:429px;top:528px;width:19px;height:17px;background:#eee;border-radius:3px;color:#111;font-size:11px;font-weight:bold;line-height:17px;text-align:center">Т</div>
<div class="a nw" style="left:452px;top:527px;font-size:14px;line-height:16px;color:#3a8dcc">Гусь-обнимусь</div>
<div class="a nw" style="left:881px;top:525px;height:18px;padding:0 7px;background:#e6e6e6;border-radius:3px;font-size:12px;font-weight:bold;line-height:17px;color:#333">Т634</div>
<div class="a nw" style="left:985px;top:527px;width:30px;height:19.5px;background:#e6e6e6;border-radius:3px;font-size:12px;font-weight:bold;line-height:19px;color:#333;text-align:center">шт</div>
<div class="a nw" style="left:1042px;top:527px;font-size:14px;line-height:16px;color:#333;border-bottom:1px dashed #999;padding-bottom:0px">1 000,00 ₽</div>
<div class="a nw" style="left:1168px;top:527px;font-size:14px;line-height:16px;color:#333;border-bottom:1px dashed #999;padding-bottom:0px">0,00 ₽</div>
<div class="a nw" style="left:1312px;top:527px;font-size:14px;line-height:16px;color:#333;border-bottom:1px dashed #999;padding-bottom:0px">300,00 ₽</div>
<div class="a" style="left:1463px;top:525px;width:69.7px;height:21.5px;background:#f1f1f1;border:1px solid #d6d6d6;border-radius:3px"></div>
<div class="a" style="left:1508px;top:525px;width:1px;height:21.5px;background:#d6d6d6"></div>
<div class="a nw" style="left:1463px;top:529px;width:47px;text-align:center;font-size:12px;line-height:14px;color:#333">28</div>
<svg style="left:1513px;top:530.5px" width="14" height="10" viewBox="0 0 14 10"><g fill="#333"><rect x="0" y="0" width="1.1" height="10"/><rect x="0" y="8.9" width="14" height="1.1"/><rect x="3" y="5" width="1.8" height="3.6"/><rect x="5.6" y="2.5" width="1.8" height="6.1"/><rect x="8.2" y="4.5" width="1.8" height="4.1"/><rect x="10.8" y="1" width="1.8" height="7.6"/></g></svg>
<div class="a" style="left:1543px;top:525px;width:26.5px;height:21.5px;background:#f4f4f4;border:1px solid #d6d6d6;border-radius:3px"></div>
<svg style="left:1549.3px;top:530.2px" width="15.2" height="14.25" viewBox="0 0 16 15"><g fill="#333"><rect x="0" y="0" width="3" height="1.8" rx=".6"/><path d="M1.8 0.6 L3.4 0.6 L5.4 12 L3.8 12 Z"/><path d="M3.2 2.4 L15.6 2.8 L14.5 8.6 L4.3 9.9 Z"/><rect x="4.2" y="10.9" width="10" height="1.5"/><circle cx="5.4" cy="13.6" r="1.4"/><circle cx="13" cy="13.6" r="1.4"/></g></svg>
<div class="a" style="left:1572px;top:525px;width:70px;height:22px;background:#fff;border:1px solid #c8c8c8"></div>
<div class="a nw" style="left:1652px;top:527px;font-size:14px;line-height:16px;color:#333">шк 33562323273<svg style="position:relative;display:inline-block;vertical-align:middle;margin-top:-3px" width="13" height="10" viewBox="0 0 13 10"><path d="M1.2 5.2 L4.6 8.4 L11.8 1.4" fill="none" stroke="#3b7d3f" stroke-width="3"/></svg></div>
<div class="a" style="left:285px;top:565.1px;width:17px;height:2.8px;background:#dcdde1;border-radius:1px"></div>
<div class="a" style="left:285px;top:570.6px;width:17px;height:2.8px;background:#dcdde1;border-radius:1px"></div>
<div class="a" style="left:285px;top:576.1px;width:17px;height:2.8px;background:#dcdde1;border-radius:1px"></div>
<div class="a nw" style="left:314px;top:564px;font-size:14px;line-height:16px;color:#222">9</div>
<div class="a" style="left:340px;top:565.5px;width:13px;height:13px;border:1px solid #666;border-radius:2px;background:#fff"></div>
<svg style="left:368px;top:565px" width="20" height="20" viewBox="0 0 20 20"><path d="M8.6 3 L12.8 2.4 L19.8 15.5 L17 19.5 L12.5 19 L8.8 9 Z" fill="#e6e4e8"/><path d="M8.5 3.5 L9.5 1.8 L10.5 3.6 Z" fill="#e0c0c0"/><path d="M12 9 L15 13" stroke="#b0a8b0" stroke-width=".8"/><path d="M2 4 L2.5 2.5 L4 4 L7 4 L8 2.5 L8.5 4 L9 18.5 L6 19 L2 18.5 Z" fill="#f4f0ec"/><path d="M2 4 L2.5 2.5 L4 4 L7 4 L8 2.5 L8.5 4 L8.5 8 L2 8 Z" fill="#e8943a"/><path d="M2 9 L3.5 9 L3.5 13 L2 13 Z M7.5 9.5 L8.8 9.5 L8.8 12 L7.5 12 Z M3 17 L7 17.5 L8 19 L3 19 Z" fill="#e08a38"/></svg>
<div class="a" style="left:403px;top:562px;width:21px;height:21.5px;background:#f4f4f4;border:1px solid #dcdcdc;border-radius:3px"></div>
<svg style="left:409px;top:567px" width="9" height="11" viewBox="0 0 9 11"><g fill="#333"><rect x="0" y="1.5" width="9" height="1.5"/><rect x="3" y="0" width="3" height="1.5" rx=".5"/><path d="M1 3.5 H8 L7.5 11 H1.5 Z"/></g><g fill="#f4f4f4"><rect x="2.7" y="4.5" width=".9" height="5"/><rect x="4.05" y="4.5" width=".9" height="5"/><rect x="5.4" y="4.5" width=".9" height="5"/></g></svg>
<div class="a" style="left:429px;top:565px;width:19px;height:17px;background:#eee;border-radius:3px;color:#111;font-size:11px;font-weight:bold;line-height:17px;text-align:center">Т</div>
<div class="a nw" style="left:452px;top:564px;font-size:14px;line-height:16px;color:#3a8dcc">Кот-батон</div>
<div class="a nw" style="left:881px;top:562px;height:18px;padding:0 7px;background:#e6e6e6;border-radius:3px;font-size:12px;font-weight:bold;line-height:17px;color:#333">Т633</div>
<div class="a nw" style="left:985px;top:564px;width:30px;height:19.5px;background:#e6e6e6;border-radius:3px;font-size:12px;font-weight:bold;line-height:19px;color:#333;text-align:center">шт</div>
<div class="a nw" style="left:1042px;top:564px;font-size:14px;line-height:16px;color:#333;border-bottom:1px dashed #999;padding-bottom:0px">800,00 ₽</div>
<div class="a nw" style="left:1168px;top:564px;font-size:14px;line-height:16px;color:#333;border-bottom:1px dashed #999;padding-bottom:0px">0,00 ₽</div>
<div class="a nw" style="left:1312px;top:564px;font-size:14px;line-height:16px;color:#333;border-bottom:1px dashed #999;padding-bottom:0px">450,00 ₽</div>
<div class="a" style="left:1463px;top:562px;width:69.7px;height:21.5px;background:#f1f1f1;border:1px solid #d6d6d6;border-radius:3px"></div>
<div class="a" style="left:1508px;top:562px;width:1px;height:21.5px;background:#d6d6d6"></div>
<div class="a nw" style="left:1463px;top:566px;width:47px;text-align:center;font-size:12px;line-height:14px;color:#333">11</div>
<svg style="left:1513px;top:567.5px" width="14" height="10" viewBox="0 0 14 10"><g fill="#333"><rect x="0" y="0" width="1.1" height="10"/><rect x="0" y="8.9" width="14" height="1.1"/><rect x="3" y="5" width="1.8" height="3.6"/><rect x="5.6" y="2.5" width="1.8" height="6.1"/><rect x="8.2" y="4.5" width="1.8" height="4.1"/><rect x="10.8" y="1" width="1.8" height="7.6"/></g></svg>
<div class="a" style="left:1543px;top:562px;width:26.5px;height:21.5px;background:#f4f4f4;border:1px solid #d6d6d6;border-radius:3px"></div>
<svg style="left:1549.3px;top:567.2px" width="15.2" height="14.25" viewBox="0 0 16 15"><g fill="#333"><rect x="0" y="0" width="3" height="1.8" rx=".6"/><path d="M1.8 0.6 L3.4 0.6 L5.4 12 L3.8 12 Z"/><path d="M3.2 2.4 L15.6 2.8 L14.5 8.6 L4.3 9.9 Z"/><rect x="4.2" y="10.9" width="10" height="1.5"/><circle cx="5.4" cy="13.6" r="1.4"/><circle cx="13" cy="13.6" r="1.4"/></g></svg>
<div class="a" style="left:1572px;top:562px;width:70px;height:22px;background:#fff;border:1px solid #c8c8c8"></div>
<div class="a nw" style="left:1652px;top:564px;font-size:14px;line-height:16px;color:#333">123444<svg style="position:relative;display:inline-block;vertical-align:middle;margin-top:-3px" width="13" height="10" viewBox="0 0 13 10"><path d="M1.2 5.2 L4.6 8.4 L11.8 1.4" fill="none" stroke="#3b7d3f" stroke-width="3"/></svg></div>
<div class="a" style="left:285px;top:602.1px;width:17px;height:2.8px;background:#dcdde1;border-radius:1px"></div>
<div class="a" style="left:285px;top:607.6px;width:17px;height:2.8px;background:#dcdde1;border-radius:1px"></div>
<div class="a" style="left:285px;top:613.1px;width:17px;height:2.8px;background:#dcdde1;border-radius:1px"></div>
<div class="a nw" style="left:314px;top:601px;font-size:14px;line-height:16px;color:#222">10</div>
<div class="a" style="left:340px;top:602.5px;width:13px;height:13px;border:1px solid #666;border-radius:2px;background:#fff"></div>
<svg style="left:368px;top:597px" width="21" height="16" viewBox="0 0 21 16"><rect x="0.8" y="0.8" width="19.4" height="14.4" fill="#fff" stroke="#d0d0d0" stroke-width="1.5"/><circle cx="5" cy="4.5" r="1.8" fill="#cfcfcf"/><path d="M2.5 13.5 L2.5 12 L7 8.5 L9.5 10 L14 5 L18.5 9.5 L18.5 13.5 Z" fill="#cfcfcf"/></svg>
<div class="a" style="left:403px;top:599px;width:21px;height:21.5px;background:#f4f4f4;border:1px solid #dcdcdc;border-radius:3px"></div>
<svg style="left:409px;top:604px" width="9" height="11" viewBox="0 0 9 11"><g fill="#333"><rect x="0" y="1.5" width="9" height="1.5"/><rect x="3" y="0" width="3" height="1.5" rx=".5"/><path d="M1 3.5 H8 L7.5 11 H1.5 Z"/></g><g fill="#f4f4f4"><rect x="2.7" y="4.5" width=".9" height="5"/><rect x="4.05" y="4.5" width=".9" height="5"/><rect x="5.4" y="4.5" width=".9" height="5"/></g></svg>
<div class="a" style="left:429px;top:602px;width:19px;height:17px;background:#eee;border-radius:3px;color:#111;font-size:11px;font-weight:bold;line-height:17px;text-align:center">Т</div>
<div class="a nw" style="left:452px;top:601px;font-size:14px;line-height:16px;color:#3a8dcc">Лисичка со скалочкой</div>
<div class="a nw" style="left:881px;top:599px;height:18px;padding:0 7px;background:#e6e6e6;border-radius:3px;font-size:12px;font-weight:bold;line-height:17px;color:#333">Т906</div>
<div class="a nw" style="left:985px;top:601px;width:30px;height:19.5px;background:#e6e6e6;border-radius:3px;font-size:12px;font-weight:bold;line-height:19px;color:#333;text-align:center">шт</div>
<div class="a nw" style="left:1042px;top:601px;font-size:14px;line-height:16px;color:#333;border-bottom:1px dashed #999;padding-bottom:0px">43,55 ₽</div>
<div class="a nw" style="left:1168px;top:601px;font-size:14px;line-height:16px;color:#333;border-bottom:1px dashed #999;padding-bottom:0px">0,00 ₽</div>
<div class="a nw" style="left:1312px;top:601px;font-size:14px;line-height:16px;color:#333;border-bottom:1px dashed #999;padding-bottom:0px">300,00 ₽</div>
<div class="a" style="left:1463px;top:599px;width:69.7px;height:21.5px;background:#f1f1f1;border:1px solid #d6d6d6;border-radius:3px"></div>
<div class="a" style="left:1508px;top:599px;width:1px;height:21.5px;background:#d6d6d6"></div>
<div class="a nw" style="left:1463px;top:603px;width:47px;text-align:center;font-size:12px;line-height:14px;color:#333">21</div>
<svg style="left:1513px;top:604.5px" width="14" height="10" viewBox="0 0 14 10"><g fill="#333"><rect x="0" y="0" width="1.1" height="10"/><rect x="0" y="8.9" width="14" height="1.1"/><rect x="3" y="5" width="1.8" height="3.6"/><rect x="5.6" y="2.5" width="1.8" height="6.1"/><rect x="8.2" y="4.5" width="1.8" height="4.1"/><rect x="10.8" y="1" width="1.8" height="7.6"/></g></svg>
<div class="a" style="left:1543px;top:599px;width:26.5px;height:21.5px;background:#f4f4f4;border:1px solid #d6d6d6;border-radius:3px"></div>
<svg style="left:1549.3px;top:604.2px" width="15.2" height="14.25" viewBox="0 0 16 15"><g fill="#333"><rect x="0" y="0" width="3" height="1.8" rx=".6"/><path d="M1.8 0.6 L3.4 0.6 L5.4 12 L3.8 12 Z"/><path d="M3.2 2.4 L15.6 2.8 L14.5 8.6 L4.3 9.9 Z"/><rect x="4.2" y="10.9" width="10" height="1.5"/><circle cx="5.4" cy="13.6" r="1.4"/><circle cx="13" cy="13.6" r="1.4"/></g></svg>
<div class="a" style="left:1572px;top:599px;width:70px;height:22px;background:#fff;border:1px solid #c8c8c8"></div>
<div class="a" style="left:285px;top:635.1px;width:17px;height:2.8px;background:#dcdde1;border-radius:1px"></div>
<div class="a" style="left:285px;top:640.6px;width:17px;height:2.8px;background:#dcdde1;border-radius:1px"></div>
<div class="a" style="left:285px;top:646.1px;width:17px;height:2.8px;background:#dcdde1;border-radius:1px"></div>
<div class="a nw" style="left:314px;top:634px;font-size:14px;line-height:16px;color:#222">11</div>
<div class="a" style="left:340px;top:635.5px;width:13px;height:13px;border:1px solid #666;border-radius:2px;background:#fff"></div>
<svg style="left:368px;top:635px" width="20" height="20" viewBox="0 0 20 20"><path d="M8 1.5 L9.5 4.5 L13.5 4.5 L15 1.5 L16 6 Q17 9 15 11 L15.5 17 L13.5 19.5 L9 19.5 L8 16 Q5 14 4.5 10 L2 7.5 L3 5.5 L6.5 9 L7 5 Z" fill="#9ca2ae"/><circle cx="10.5" cy="8" r="1" fill="#3a6a90"/><circle cx="13.5" cy="8" r="1" fill="#3a6a90"/><path d="M1.5 7.5 L3 4 L5 6.5 Z" fill="#7aa8d8"/><path d="M9.5 12 L14 12 L13.5 17 L10 17 Z" fill="#c4c8d0"/><path d="M8 1.5 L9.5 4.5 L7.5 4.5 Z M15 1.5 L13.5 4.5 L15.5 4.5 Z" fill="#6a90c0"/></svg>
<div class="a" style="left:403px;top:632px;width:21px;height:21.5px;background:#f4f4f4;border:1px solid #dcdcdc;border-radius:3px"></div>
<svg style="left:409px;top:637px" width="9" height="11" viewBox="0 0 9 11"><g fill="#333"><rect x="0" y="1.5" width="9" height="1.5"/><rect x="3" y="0" width="3" height="1.5" rx=".5"/><path d="M1 3.5 H8 L7.5 11 H1.5 Z"/></g><g fill="#f4f4f4"><rect x="2.7" y="4.5" width=".9" height="5"/><rect x="4.05" y="4.5" width=".9" height="5"/><rect x="5.4" y="4.5" width=".9" height="5"/></g></svg>
<div class="a" style="left:429px;top:635px;width:26.5px;height:17px;background:#e04b3b;border-radius:3px;color:#fff;font-size:11px;font-weight:bold;line-height:17px;text-align:center">СТ</div>
<div class="a nw" style="left:459.5px;top:634px;font-size:14px;line-height:16px;color:#3a8dcc">СТ Игрушки</div>
<div class="a nw" style="left:881px;top:632px;height:18px;padding:0 7px;background:#e6e6e6;border-radius:3px;font-size:12px;font-weight:bold;line-height:17px;color:#333">С7298</div>
<div class="a nw" style="left:985px;top:634px;width:30px;height:19.5px;background:#e6e6e6;border-radius:3px;font-size:12px;font-weight:bold;line-height:19px;color:#333;text-align:center">шт</div>
<div class="a nw" style="left:1042px;top:634px;font-size:14px;line-height:16px;color:#333;border-bottom:1px dashed #999;padding-bottom:0px">1 500,00 ₽</div>
<div class="a nw" style="left:1168px;top:634px;font-size:14px;line-height:16px;color:#333;border-bottom:1px dashed #999;padding-bottom:0px">2 000,00 ₽</div>
<div class="a nw" style="left:1312px;top:634px;font-size:14px;line-height:16px;color:#333;border-bottom:1px dashed #999;padding-bottom:0px">550,00 ₽</div>
<div class="a" style="left:1463px;top:632px;width:69.7px;height:21.5px;background:#f1f1f1;border:1px solid #d6d6d6;border-radius:3px"></div>
<div class="a nw" style="left:1463px;top:636px;width:71px;text-align:center;font-size:12px;line-height:14px;color:#333">11</div>
<div class="a" style="left:1543px;top:632px;width:26.5px;height:21.5px;background:#f4f4f4;border:1px solid #d6d6d6;border-radius:3px"></div>
<svg style="left:1549.3px;top:637.2px" width="15.2" height="14.25" viewBox="0 0 16 15"><g fill="#333"><rect x="0" y="0" width="3" height="1.8" rx=".6"/><path d="M1.8 0.6 L3.4 0.6 L5.4 12 L3.8 12 Z"/><path d="M3.2 2.4 L15.6 2.8 L14.5 8.6 L4.3 9.9 Z"/><rect x="4.2" y="10.9" width="10" height="1.5"/><circle cx="5.4" cy="13.6" r="1.4"/><circle cx="13" cy="13.6" r="1.4"/></g></svg>
<div class="a" style="left:1572px;top:632px;width:70px;height:22px;background:#fff;border:1px solid #c8c8c8"></div>
<svg style="left:285px;top:697px" width="14" height="13" viewBox="0 0 14 13"><g fill="#3a87c6"><path d="M5.5 0 H8.5 V5 H11 L7 9 L3 5 H5.5 Z"/><path d="M0 8.5 H4 L7 11 L10 8.5 H14 V13 H0 Z"/></g><g fill="#fff"><rect x="10" y="10.5" width="1" height="1"/><rect x="12" y="10.5" width="1" height="1"/></g></svg>
<div class="a nw" style="left:1716px;top:699px;font-size:11.7px;line-height:14px;color:#8a8a8a;font-weight:bold">1 - 11 <span style="font-weight:normal">из</span> <span style="color:#777">11</span></div>
<div class="a" style="left:1787.3px;top:697px;width:23.7px;height:17px;background:#5a9fdc;border-radius:3px 0 0 3px;color:#fff;font-size:12px;font-weight:bold;line-height:17px;text-align:center">25</div>
<div class="a" style="left:1811px;top:697px;width:23.5px;height:17px;background:#f5f5f5;border:1px solid #ddd;border-radius:0 3px 3px 0;color:#333;font-size:12px;line-height:15px;text-align:center">50</div>
<div class="a" style="left:265px;top:739px;width:1579px;height:230px;background:#f9f9f9;border-radius:5px"></div>
<svg style="left:1813.5px;top:757.5px" width="13" height="13" viewBox="0 0 13 13"><path d="M1.5 1.5 L11.5 11.5 M11.5 1.5 L1.5 11.5" stroke="#555" stroke-width="3"/></svg>
<div class="a nw" style="left:645px;top:792.5px;width:1200px;text-align:center;font-size:32px;line-height:37px;color:#3a3a3a">Здесь будет ваш Каталог</div>
<div class="a nw" style="left:645px;top:848.0px;width:1200px;text-align:center;font-size:20px;line-height:23px;color:#3a3a3a">Создайте вручную: <span style="color:#3d9ae4;text-decoration:underline">Категорию</span>, <span style="color:#3d9ae4;text-decoration:underline">Товар</span>, <span style="color:#3d9ae4;text-decoration:underline">Услугу</span>, <span style="color:#3d9ae4;text-decoration:underline">Составной товар</span> или <span style="color:#3d9ae4;text-decoration:underline">Шаблон</span>. Наполните каталог через</div>
<div class="a nw" style="left:645px;top:876.5px;width:1200px;text-align:center;font-size:20px;line-height:23px;color:#3a3a3a"><span style="color:#3d9ae4;text-decoration:underline">Импорт таблицы</span> или через интеграции: с <span style="color:#3d9ae4;text-decoration:underline">ВК товары</span>, <span style="color:#3d9ae4;text-decoration:underline">Озон</span>, <span style="color:#3d9ae4;text-decoration:underline">Вайлдбериз</span>, <span style="color:#3d9ae4;text-decoration:underline">Яндекс.Маркет</span>, <span style="color:#3d9ae4;text-decoration:underline">1С</span>, <span style="color:#3d9ae4;text-decoration:underline">Эвотор</span>, <span style="color:#3d9ae4;text-decoration:underline">Т-банк</span></div>
<div class="a nw" style="left:645px;top:905.0px;width:1200px;text-align:center;font-size:20px;line-height:23px;color:#3a3a3a"><span style="color:#3d9ae4;text-decoration:underline">(aQsi)</span>, или закажите <span style="color:#3d9ae4;text-decoration:underline">автоматический парсинг</span> с любого сайта.</div>
<div class="a" style="left:366px;top:776px;width:278.5px;height:170.5px;background:#eceef1;box-shadow:0 1px 3px rgba(0,0,0,.4);border-radius:3px;overflow:hidden">
<div class="a" style="left:0;top:0;width:279px;height:8.2px;background:#e6e6e6"></div>
<div class="a" style="left:3.5999999999999996px;top:3.2px;width:2.4px;height:2.4px;border-radius:50%;background:#ff5f57"></div>
<div class="a" style="left:7.499999999999999px;top:3.2px;width:2.4px;height:2.4px;border-radius:50%;background:#febc2e"></div>
<div class="a" style="left:11.700000000000001px;top:3.2px;width:2.4px;height:2.4px;border-radius:50%;background:#28c840"></div>
<div class="a" style="left:18px;top:2px;width:5px;height:4px;background:#d4d4d4;border-radius:1px"></div><div class="a" style="left:37px;top:2px;width:5px;height:4px;background:#b8cfee;border-radius:1px"></div><div class="a" style="left:45px;top:2px;width:4px;height:4px;background:#d0d0d0;border-radius:1px"></div>
<div class="a" style="left:0;top:8.2px;width:279px;height:8.5px;background:#f2f2f2"></div>
<div class="a" style="left:30.8px;top:9.5px;width:213.5px;height:5.7px;background:#e0e0e0;border-radius:3px"></div>
<div class="a" style="left:36px;top:11.7px;width:80px;height:1.3px;background:#b0b0b0"></div>
<div class="a" style="left:0;top:16.7px;width:279px;height:11.3px;background:#fff"></div>
<div class="a" style="left:9px;top:18.6px;width:6px;height:8px;background:#2a8ae0;border-radius:1px"></div><div class="a" style="left:16px;top:19px;width:10px;height:3px;border:1px solid #30c0e0;border-radius:1px"></div><div class="a" style="left:16px;top:23.5px;width:28px;height:3px;border-top:1.2px solid #4a9ae8;border-bottom:1.2px solid #4a9ae8"></div>
<div class="a" style="left:56.099999999999994px;top:21.5px;width:2.6px;height:2.4px;background:#666"></div>
<div class="a" style="left:65.5px;top:21.5px;width:2.6px;height:2.4px;background:#3a3"></div>
<div class="a" style="left:75.0px;top:21.5px;width:2.6px;height:2.4px;background:#444"></div>
<div class="a" style="left:187.8px;top:21.5px;width:2.6px;height:2.4px;background:#888"></div>
<div class="a" style="left:197.8px;top:21.5px;width:2.6px;height:2.4px;background:#777"></div>
<div class="a" style="left:207.3px;top:21.5px;width:2.6px;height:2.4px;background:#888"></div>
<div class="a" style="left:216.8px;top:21.5px;width:2.6px;height:2.4px;background:#888"></div>
<div class="a" style="left:223px;top:21.5px;width:7px;height:2px;background:#aaa"></div>
<div class="a" style="left:234.5px;top:20.8px;width:3.5px;height:3.5px;border-radius:50%;background:#e05a4a"></div><div class="a" style="left:239px;top:21.6px;width:18px;height:2px;background:#c0b0b0"></div>
<div class="a" style="left:257.8px;top:20.1px;width:5.2px;height:5.2px;border-radius:50%;background:#3a8ae0"></div>
<div class="a" style="left:270px;top:20px;width:5px;height:5px;border-radius:50%;border:.8px solid #9cc4f0"></div>
<div class="a" style="left:0;top:28px;width:53px;height:141px;background:#5b606f"></div>
<div class="a" style="left:1.5px;top:30.8px;width:48px;height:5.2px;background:#50555f;border-radius:1px"></div>
<div class="a" style="left:0;top:39.3px;width:53px;height:8.5px;background:#4b505d"></div>
<div class="a" style="left:0;top:39.3px;width:.8px;height:8.5px;background:#ddd"></div>
<div class="a" style="left:4px;top:42.6px;width:2.5px;height:1.8px;background:#c8cad4"></div>
<div class="a" style="left:8px;top:42.7px;width:13.200000000000001px;height:1.6px;background:#c8cad4"></div>
<div class="a" style="left:4px;top:52.1px;width:2.5px;height:1.8px;background:#c8cad4"></div>
<div class="a" style="left:8px;top:52.2px;width:14.3px;height:1.6px;background:#c8cad4"></div>
<div class="a" style="left:47.5px;top:52.2px;width:1px;height:1.6px;background:#ccc"></div>
<div class="a" style="left:4px;top:61.5px;width:2.5px;height:1.8px;background:#c8cad4"></div>
<div class="a" style="left:8px;top:61.6px;width:14.3px;height:1.6px;background:#c8cad4"></div>
<div class="a" style="left:4px;top:70.89999999999999px;width:2.5px;height:1.8px;background:#c8cad4"></div>
<div class="a" style="left:8px;top:71.0px;width:12.100000000000001px;height:1.6px;background:#c8cad4"></div>
<div class="a" style="left:47.5px;top:71.0px;width:1px;height:1.6px;background:#ccc"></div>
<div class="a" style="left:4px;top:80.39999999999999px;width:2.5px;height:1.8px;background:#c8cad4"></div>
<div class="a" style="left:8px;top:80.5px;width:9.9px;height:1.6px;background:#c8cad4"></div>
<div class="a" style="left:47.5px;top:80.5px;width:1px;height:1.6px;background:#ccc"></div>
<div class="a" style="left:4px;top:89.8px;width:2.5px;height:1.8px;background:#c8cad4"></div>
<div class="a" style="left:8px;top:89.9px;width:8.8px;height:1.6px;background:#c8cad4"></div>
<div class="a" style="left:47.5px;top:89.9px;width:1px;height:1.6px;background:#ccc"></div>
<div class="a" style="left:4px;top:99.3px;width:2.5px;height:1.8px;background:#c8cad4"></div>
<div class="a" style="left:8px;top:99.4px;width:6.6000000000000005px;height:1.6px;background:#c8cad4"></div>
<div class="a" style="left:47.5px;top:99.4px;width:1px;height:1.6px;background:#ccc"></div>
<div class="a" style="left:4px;top:108.69999999999999px;width:2.5px;height:1.8px;background:#c8cad4"></div>
<div class="a" style="left:8px;top:108.8px;width:7.700000000000001px;height:1.6px;background:#c8cad4"></div>
<div class="a" style="left:47.5px;top:108.8px;width:1px;height:1.6px;background:#ccc"></div>
<div class="a" style="left:4px;top:118.1px;width:2.5px;height:1.8px;background:#c8cad4"></div>
<div class="a" style="left:8px;top:118.2px;width:20.900000000000002px;height:1.6px;background:#c8cad4"></div>
<div class="a" style="left:47.5px;top:118.2px;width:1px;height:1.6px;background:#ccc"></div>
<div class="a" style="left:4px;top:127.6px;width:2.5px;height:1.8px;background:#c8cad4"></div>
<div class="a" style="left:8px;top:127.7px;width:20.900000000000002px;height:1.6px;background:#c8cad4"></div>
<div class="a" style="left:4px;top:137.1px;width:2.5px;height:1.8px;background:#c8cad4"></div>
<div class="a" style="left:8px;top:137.2px;width:8.8px;height:1.6px;background:#c8cad4"></div>
<div class="a" style="left:4px;top:146.5px;width:2.5px;height:1.8px;background:#c8cad4"></div>
<div class="a" style="left:8px;top:146.6px;width:12.100000000000001px;height:1.6px;background:#c8cad4"></div>
<div class="a" style="left:4px;top:156.0px;width:2.5px;height:1.8px;background:#c8cad4"></div>
<div class="a" style="left:8px;top:156.1px;width:11.0px;height:1.6px;background:#c8cad4"></div>
<div class="a" style="left:47.5px;top:156.1px;width:1px;height:1.6px;background:#ccc"></div>
<div class="a" style="left:44px;top:127px;width:5px;height:3px;background:#5fce70"></div>
<div class="a" style="left:56px;top:32.2px;width:14px;height:1.8px;background:#b5b8c0"></div><div class="a" style="left:72px;top:31.8px;width:2.6px;height:2.6px;border-radius:50%;border:.5px solid #bbb"></div>
<div class="a" style="left:56.3px;top:39px;width:218.7px;height:10.2px;background:#f7f8fa;border-radius:1px"></div>
<div class="a" style="left:59px;top:41.3px;width:19px;height:5.5px;background:#fff;border:.5px solid #ddd"></div><div class="a" style="left:80.5px;top:41.3px;width:19px;height:5.5px;background:#fff;border:.5px solid #ddd"></div>
<div class="a" style="left:56.3px;top:52.2px;width:218.7px;height:81.6px;background:#fff;border-radius:1px"></div>
<div class="a" style="left:59px;top:55.5px;width:81px;height:5px;border:.5px solid #e0e0e0;background:#fafafa"></div><div class="a" style="left:144px;top:57px;width:5px;height:2px;background:#ccc"></div><div class="a" style="left:151px;top:56.8px;width:46px;height:1.4px;background:#7eb0e0"></div>
<div class="a" style="left:59px;top:65.5px;width:217px;height:.6px;background:#eee"></div>
<div class="a" style="left:60px;top:68.3px;width:2px;height:1.8px;background:#8a8e96"></div>
<div class="a" style="left:67px;top:68.3px;width:2px;height:1.8px;background:#8a8e96"></div>
<div class="a" style="left:74px;top:68.3px;width:2px;height:1.8px;background:#8a8e96"></div>
<div class="a" style="left:79px;top:68.3px;width:2px;height:1.8px;background:#8a8e96"></div>
<div class="a" style="left:108px;top:68.3px;width:10px;height:1.8px;background:#8a8e96"></div>
<div class="a" style="left:177px;top:68.3px;width:10px;height:1.8px;background:#8a8e96"></div>
<div class="a" style="left:189px;top:68.3px;width:12px;height:1.8px;background:#8a8e96"></div>
<div class="a" style="left:209px;top:68.3px;width:12px;height:1.8px;background:#8a8e96"></div>
<div class="a" style="left:233px;top:68.3px;width:14px;height:1.8px;background:#8a8e96"></div>
<div class="a" style="left:257px;top:68.3px;width:3px;height:1.8px;background:#8a8e96"></div>
<div class="a" style="left:189px;top:65.3px;width:6px;height:1.2px;background:#a0a4ac"></div>
<div class="a" style="left:209px;top:65.3px;width:6px;height:1.2px;background:#a0a4ac"></div>
<div class="a" style="left:233px;top:65.3px;width:6px;height:1.2px;background:#a0a4ac"></div>
<div class="a" style="left:60px;top:75.69999999999999px;width:2px;height:1.8px;background:#ccc"></div>
<div class="a" style="left:66px;top:75.69999999999999px;width:2px;height:1.8px;background:#999"></div>
<div class="a" style="left:72px;top:75.69999999999999px;width:2px;height:1.8px;background:#bbb"></div>
<div class="a" style="left:78px;top:75.69999999999999px;width:3px;height:1.8px;background:#c96a50"></div>
<div class="a" style="left:90px;top:75.69999999999999px;width:20px;height:1.8px;background:#f4f4f4"></div>
<div class="a" style="left:110px;top:75.69999999999999px;width:30px;height:1.8px;background:#7ab0e0"></div>
<div class="a" style="left:172px;top:75.69999999999999px;width:5px;height:1.8px;background:#aaa"></div>
<div class="a" style="left:181px;top:75.69999999999999px;width:14px;height:1.8px;background:#999"></div>
<div class="a" style="left:201px;top:75.69999999999999px;width:14px;height:1.8px;background:#999"></div>
<div class="a" style="left:222px;top:75.69999999999999px;width:14px;height:1.8px;background:#999"></div>
<div class="a" style="left:248px;top:75.69999999999999px;width:5px;height:1.8px;background:#bbb"></div>
<div class="a" style="left:255px;top:75.69999999999999px;width:5px;height:1.8px;background:#999"></div>
<div class="a" style="left:59px;top:81.1px;width:217px;height:.5px;background:#f0f0f0"></div>
<div class="a" style="left:60px;top:86.6px;width:2px;height:1.8px;background:#ccc"></div>
<div class="a" style="left:66px;top:86.6px;width:2px;height:1.8px;background:#999"></div>
<div class="a" style="left:72px;top:86.6px;width:2px;height:1.8px;background:#bbb"></div>
<div class="a" style="left:78px;top:86.6px;width:3px;height:1.8px;background:#c96a50"></div>
<div class="a" style="left:90px;top:86.6px;width:20px;height:1.8px;background:#f4f4f4"></div>
<div class="a" style="left:110px;top:86.6px;width:30px;height:1.8px;background:#7ab0e0"></div>
<div class="a" style="left:172px;top:86.6px;width:5px;height:1.8px;background:#aaa"></div>
<div class="a" style="left:181px;top:86.6px;width:14px;height:1.8px;background:#999"></div>
<div class="a" style="left:201px;top:86.6px;width:14px;height:1.8px;background:#999"></div>
<div class="a" style="left:222px;top:86.6px;width:14px;height:1.8px;background:#999"></div>
<div class="a" style="left:248px;top:86.6px;width:5px;height:1.8px;background:#bbb"></div>
<div class="a" style="left:255px;top:86.6px;width:5px;height:1.8px;background:#999"></div>
<div class="a" style="left:59px;top:92.0px;width:217px;height:.5px;background:#f0f0f0"></div>
<div class="a" style="left:60px;top:97.39999999999999px;width:2px;height:1.8px;background:#ccc"></div>
<div class="a" style="left:66px;top:97.39999999999999px;width:2px;height:1.8px;background:#999"></div>
<div class="a" style="left:72px;top:97.39999999999999px;width:2px;height:1.8px;background:#bbb"></div>
<div class="a" style="left:78px;top:97.39999999999999px;width:3px;height:1.8px;background:#c96a50"></div>
<div class="a" style="left:90px;top:97.39999999999999px;width:20px;height:1.8px;background:#f4f4f4"></div>
<div class="a" style="left:110px;top:97.39999999999999px;width:30px;height:1.8px;background:#7ab0e0"></div>
<div class="a" style="left:172px;top:97.39999999999999px;width:5px;height:1.8px;background:#aaa"></div>
<div class="a" style="left:181px;top:97.39999999999999px;width:14px;height:1.8px;background:#999"></div>
<div class="a" style="left:201px;top:97.39999999999999px;width:14px;height:1.8px;background:#999"></div>
<div class="a" style="left:222px;top:97.39999999999999px;width:14px;height:1.8px;background:#999"></div>
<div class="a" style="left:248px;top:97.39999999999999px;width:5px;height:1.8px;background:#bbb"></div>
<div class="a" style="left:255px;top:97.39999999999999px;width:5px;height:1.8px;background:#999"></div>
<div class="a" style="left:59px;top:102.8px;width:217px;height:.5px;background:#f0f0f0"></div>
<div class="a" style="left:60px;top:105.3px;width:2px;height:1.8px;background:#ccc"></div>
<div class="a" style="left:66px;top:105.3px;width:2px;height:1.8px;background:#999"></div>
<div class="a" style="left:72px;top:105.3px;width:2px;height:1.8px;background:#bbb"></div>
<div class="a" style="left:78px;top:105.3px;width:3px;height:1.8px;background:#c96a50"></div>
<div class="a" style="left:90px;top:105.3px;width:20px;height:1.8px;background:#f4f4f4"></div>
<div class="a" style="left:110px;top:105.3px;width:30px;height:1.8px;background:#7ab0e0"></div>
<div class="a" style="left:172px;top:105.3px;width:5px;height:1.8px;background:#aaa"></div>
<div class="a" style="left:181px;top:105.3px;width:14px;height:1.8px;background:#999"></div>
<div class="a" style="left:201px;top:105.3px;width:14px;height:1.8px;background:#999"></div>
<div class="a" style="left:222px;top:105.3px;width:14px;height:1.8px;background:#999"></div>
<div class="a" style="left:248px;top:105.3px;width:5px;height:1.8px;background:#bbb"></div>
<div class="a" style="left:255px;top:105.3px;width:5px;height:1.8px;background:#999"></div>
<div class="a" style="left:59px;top:110.7px;width:217px;height:.5px;background:#f0f0f0"></div>
<div class="a" style="left:60px;top:116.3px;width:2px;height:1.8px;background:#ccc"></div>
<div class="a" style="left:66px;top:116.3px;width:2px;height:1.8px;background:#999"></div>
<div class="a" style="left:72px;top:116.3px;width:2px;height:1.8px;background:#bbb"></div>
<div class="a" style="left:78px;top:116.3px;width:3px;height:1.8px;background:#c96a50"></div>
<div class="a" style="left:90px;top:116.3px;width:20px;height:1.8px;background:#f4f4f4"></div>
<div class="a" style="left:110px;top:116.3px;width:30px;height:1.8px;background:#7ab0e0"></div>
<div class="a" style="left:172px;top:116.3px;width:5px;height:1.8px;background:#aaa"></div>
<div class="a" style="left:181px;top:116.3px;width:14px;height:1.8px;background:#999"></div>
<div class="a" style="left:201px;top:116.3px;width:14px;height:1.8px;background:#999"></div>
<div class="a" style="left:222px;top:116.3px;width:14px;height:1.8px;background:#999"></div>
<div class="a" style="left:248px;top:116.3px;width:5px;height:1.8px;background:#bbb"></div>
<div class="a" style="left:255px;top:116.3px;width:5px;height:1.8px;background:#999"></div>
<div class="a" style="left:59px;top:121.7px;width:217px;height:.5px;background:#f0f0f0"></div>
<div class="a" style="left:60px;top:127.2px;width:10px;height:1.6px;background:#999"></div>
<div class="a" style="left:243px;top:127px;width:8px;height:1.4px;background:#bbb"></div><div class="a" style="left:252.5px;top:126px;width:4.8px;height:3.2px;background:#7ab2e8"></div><div class="a" style="left:257.5px;top:126px;width:9px;height:3.2px;background:#f0f0f0"></div>
<svg style="left:0;top:0" width="279" height="170" viewBox="0 0 279 170">
<circle cx="127.8" cy="77.5" r="39.4" fill="none" stroke="#8daef4" stroke-width="13.2"/>
<path d="M160.5 109.5 L186.5 136.5" stroke="#8daef4" stroke-width="14.5" stroke-linecap="round"/>
<path d="M154 101 L162 111" stroke="#8daef4" stroke-width="10"/>
<rect x="108.3" y="71.8" width="38.7" height="10.6" fill="#8daef4"/><rect x="123" y="57.9" width="10.2" height="38.1" fill="#8daef4"/>
</svg>
</div>
<div class="a" style="left:273.5px;top:354.5px;width:1562.5px;height:40.5px;border:3px solid #e23b34;border-radius:4px"></div>
<div class="a" style="left:270.5px;top:432.0px;width:1563.5px;height:83.0px;border:3px solid #e23b34;border-radius:4px"></div>
<div class="a" style="left:271.5px;top:519.5px;width:1562.5px;height:104.5px;border:3px solid #e23b34;border-radius:4px"></div>
<svg style="left:0;top:0" width="1920" height="953" viewBox="0 0 1920 953">
<path d="M535.2 221 L458 302" stroke="#e23b34" stroke-width="3.6" stroke-linecap="round"/>
<path d="M441.4 319 L450.2 290.6 L470.1 309.1 Z" fill="#e23b34"/>
<path d="M364.5 746.4 L414 680" stroke="#e23b34" stroke-width="3.6" stroke-linecap="round"/>
<path d="M428.7 660.2 L401.6 674 L423.7 690.4 Z" fill="#e23b34"/>
</svg>
</body></html>
